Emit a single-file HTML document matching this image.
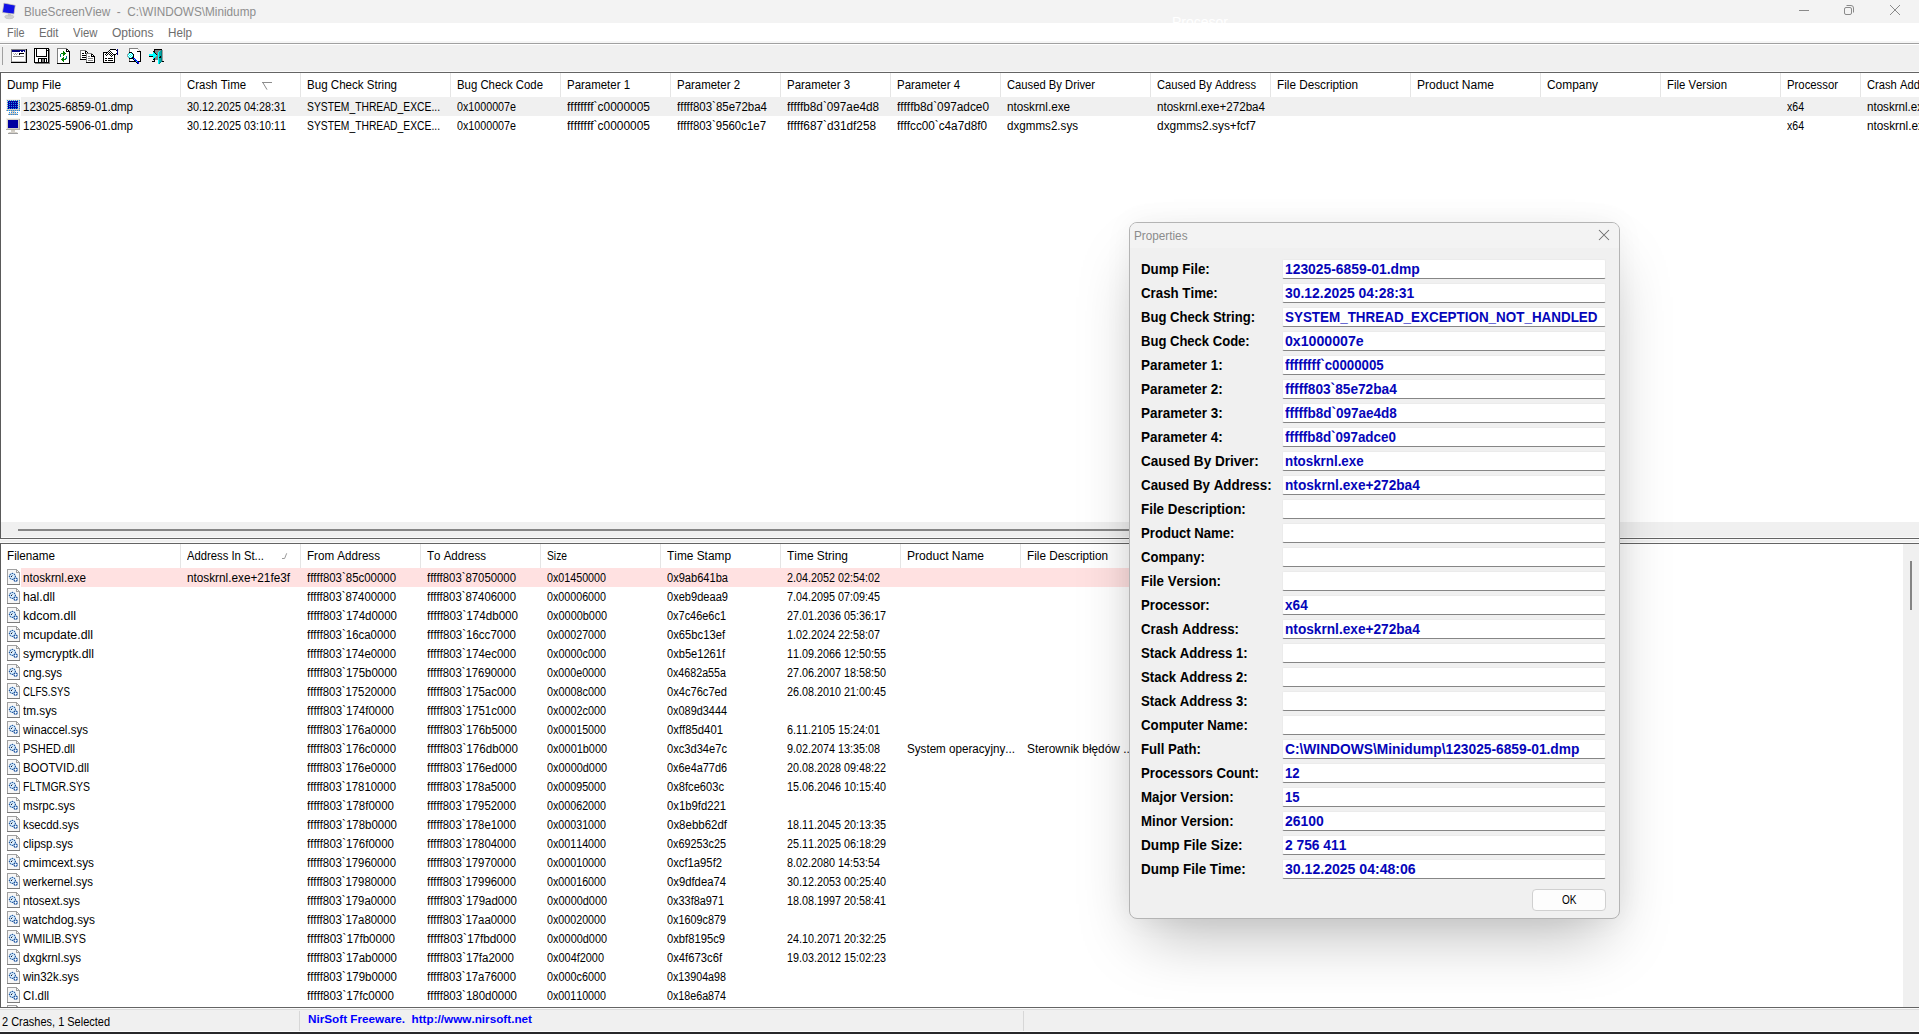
<!DOCTYPE html><html><head><meta charset="utf-8"><title>BlueScreenView</title><style>
*{box-sizing:border-box}
html,body{margin:0;padding:0}
body{width:1919px;height:1034px;overflow:hidden;position:relative;background:#f0f0f0;font-family:"Liberation Sans",sans-serif;font-size:12px;color:#000;font-kerning:none}
div,span,svg{position:absolute}
.t{white-space:pre;transform-origin:0 50%;display:block}
svg{shape-rendering:crispEdges;overflow:visible}
svg.gp{shape-rendering:geometricPrecision}
.dlg{left:1129px;top:222px;width:491px;height:697px;background:#f0f0f0;border:1px solid #b4b4b4;border-radius:8px;box-shadow:0 30px 60px -15px rgba(0,0,0,.27),0 0 28px rgba(0,0,0,.05)}
.dt{left:0;top:0;width:489px;height:25px;background:#f3f3f3;border-radius:7px 7px 0 0}
.f{left:152px;width:324px;height:20px;background:#fff;border:1px solid #ebebeb;border-bottom:1px solid #868686;border-radius:2px}
.ok{left:1532px;top:889px;width:74px;height:22px;background:#fdfdfd;border:1px solid #d0d0d0;border-radius:4px}
</style></head><body>
<div style="left:0;top:0;width:1919px;height:23px;background:#f3f3f3"></div>
<svg style="left:0;top:0" width="24" height="23" viewBox="0 0 24 23" class="gp"><ellipse cx="9.3" cy="16.8" rx="4.6" ry="2" fill="#d0d0d0" stroke="#bdbdbd" stroke-width=".6"/><path d="M8 13l3 .5l-.5 3l-2.5-.3z" fill="#c4c4c4"/><path d="M3.9 3.1L15.3 5.2L14 14.1L2.4 12.6z" fill="#1212e6" stroke="#d8d4b8" stroke-width=".7"/></svg>
<span class="t" style="left:24px;top:1px;height:23px;line-height:23px;transform:scaleX(0.9800);color:#8e8e8e">BlueScreenView  -  C:\WINDOWS\Minidump</span>
<span class="t" style="left:1171.5px;top:13px;height:18px;line-height:18px;transform:scaleX(0.9330);font-size:15px;color:#fff">Procesor</span>
<svg style="left:1790px;top:0" width="129" height="23" viewBox="0 0 129 23" class="gp"><g fill="none" stroke="#8a8a8a" stroke-width="1"><path d="M9 10.5h10"/><rect x="54.5" y="7.5" width="7" height="7" rx="1.5"/><path d="M56.5 5.5h4.5a2.5 2.5 0 0 1 2.5 2.5v4.5"/><path d="M100 5l10 10M110 5l-10 10"/></g></svg>
<div style="left:0;top:23px;width:1919px;height:20px;background:#fff"></div>
<div style="left:0;top:41px;width:1919px;height:2px;background:#f6f6f6"></div>
<div style="left:0;top:43px;width:1919px;height:1px;background:#a0a0a0"></div>
<div style="left:0;top:44px;width:1919px;height:1px;background:#fff"></div>
<span class="t" style="left:7.3px;top:24px;height:19px;line-height:19px;transform:scaleX(0.9051);color:#6d6d6d">File</span>
<span class="t" style="left:39.2px;top:24px;height:19px;line-height:19px;transform:scaleX(0.9430);color:#6d6d6d">Edit</span>
<span class="t" style="left:73px;top:24px;height:19px;line-height:19px;transform:scaleX(0.9420);color:#6d6d6d">View</span>
<span class="t" style="left:112px;top:24px;height:19px;line-height:19px;transform:scaleX(1.0035);color:#6d6d6d">Options</span>
<span class="t" style="left:168px;top:24px;height:19px;line-height:19px;transform:scaleX(0.9725);color:#6d6d6d">Help</span>
<div style="left:2px;top:47px;width:1px;height:18px;background:#a0a0a0"></div>
<svg style="left:11px;top:49px" width="16" height="14" viewBox="0 0 16 14"><path fill="#808080" d="M0 0h15v1h-15zM0 1h1v1h-1zM0 2h1v1h-1zM0 3h1v1h-1zM0 4h1v1h-1zM0 5h1v1h-1zM0 6h1v1h-1zM0 7h1v1h-1zM2 7h11v1h-11zM0 8h1v1h-1zM0 9h1v1h-1zM0 10h1v1h-1zM0 11h1v1h-1zM0 12h1v1h-1z"/><path fill="#000" d="M15 0h1v1h-1zM15 1h1v1h-1zM15 2h1v1h-1zM15 3h1v1h-1zM8 4h5v1h-5zM15 4h1v1h-1zM8 5h1v1h-1zM15 5h1v1h-1zM15 6h1v1h-1zM15 7h1v1h-1zM15 8h1v1h-1zM15 9h1v1h-1zM15 10h1v1h-1zM15 11h1v1h-1zM15 12h1v1h-1zM0 13h16v1h-16z"/><path fill="#000080" d="M1 1h13v1h-13zM1 2h8v1h-8zM10 2h2v1h-2zM13 2h1v1h-1z"/><path fill="#c0c0c0" d="M14 1h1v1h-1zM14 2h1v1h-1zM14 3h1v1h-1zM2 4h1v1h-1zM6 4h1v1h-1zM14 4h1v1h-1zM14 5h1v1h-1zM14 6h1v1h-1zM14 7h1v1h-1zM14 8h1v1h-1zM14 9h1v1h-1zM14 10h1v1h-1zM14 11h1v1h-1zM1 12h14v1h-14z"/><path fill="#fff" d="M9 2h1v1h-1zM12 2h1v1h-1zM1 3h13v1h-13zM1 4h1v1h-1zM3 4h1v1h-1zM5 4h1v1h-1zM7 4h1v1h-1zM13 4h1v1h-1zM1 5h2v1h-2zM4 5h1v1h-1zM6 5h2v1h-2zM9 5h5v1h-5zM1 6h13v1h-13zM1 7h1v1h-1zM13 7h1v1h-1zM1 8h13v1h-13zM1 9h13v1h-13zM1 10h13v1h-13zM1 11h13v1h-13z"/><path fill="#a0a0a0" d="M4 4h1v1h-1zM3 5h1v1h-1zM5 5h1v1h-1z"/></svg><svg style="left:34px;top:48px" width="16" height="16" viewBox="0 0 16 16"><path fill="#000" d="M0 0h15v1h-15zM0 1h1v1h-1zM2 1h1v1h-1zM12 1h1v1h-1zM14 1h1v1h-1zM0 2h1v1h-1zM2 2h1v1h-1zM12 2h3v1h-3zM0 3h1v1h-1zM2 3h1v1h-1zM12 3h1v1h-1zM14 3h1v1h-1zM0 4h1v1h-1zM2 4h1v1h-1zM12 4h1v1h-1zM14 4h1v1h-1zM0 5h1v1h-1zM2 5h1v1h-1zM12 5h1v1h-1zM14 5h1v1h-1zM0 6h1v1h-1zM2 6h1v1h-1zM12 6h1v1h-1zM14 6h1v1h-1zM0 7h1v1h-1zM2 7h1v1h-1zM12 7h1v1h-1zM14 7h1v1h-1zM0 8h1v1h-1zM2 8h11v1h-11zM14 8h1v1h-1zM0 9h1v1h-1zM14 9h1v1h-1zM0 10h1v1h-1zM4 10h9v1h-9zM14 10h1v1h-1zM0 11h1v1h-1zM4 11h1v1h-1zM7 11h1v1h-1zM10 11h1v1h-1zM12 11h1v1h-1zM14 11h1v1h-1zM0 12h1v1h-1zM4 12h1v1h-1zM7 12h1v1h-1zM10 12h1v1h-1zM12 12h1v1h-1zM14 12h1v1h-1zM0 13h1v1h-1zM4 13h1v1h-1zM7 13h1v1h-1zM10 13h1v1h-1zM12 13h1v1h-1zM14 13h1v1h-1zM0 14h15v1h-15z"/><path fill="#fff" d="M1 1h1v1h-1zM3 1h9v1h-9zM13 1h1v1h-1zM1 2h1v1h-1zM3 2h9v1h-9zM1 3h1v1h-1zM3 3h9v1h-9zM13 3h1v1h-1zM1 4h1v1h-1zM3 4h9v1h-9zM13 4h1v1h-1zM1 5h1v1h-1zM3 5h9v1h-9zM13 5h1v1h-1zM1 6h1v1h-1zM3 6h9v1h-9zM13 6h1v1h-1zM1 7h1v1h-1zM3 7h9v1h-9zM13 7h1v1h-1zM1 8h1v1h-1zM13 8h1v1h-1zM1 9h13v1h-13zM1 10h3v1h-3zM13 10h1v1h-1zM1 11h3v1h-3zM5 11h2v1h-2zM11 11h1v1h-1zM13 11h1v1h-1zM1 12h3v1h-3zM5 12h2v1h-2zM11 12h1v1h-1zM13 12h1v1h-1zM1 13h3v1h-3zM5 13h2v1h-2zM11 13h1v1h-1zM13 13h1v1h-1z"/><path fill="#808080" d="M15 1h1v1h-1zM15 2h1v1h-1zM15 3h1v1h-1zM15 4h1v1h-1zM15 5h1v1h-1zM15 6h1v1h-1zM15 7h1v1h-1zM15 8h1v1h-1zM15 9h1v1h-1zM15 10h1v1h-1zM8 11h2v1h-2zM15 11h1v1h-1zM8 12h2v1h-2zM15 12h1v1h-1zM8 13h2v1h-2zM15 13h1v1h-1zM15 14h1v1h-1zM1 15h15v1h-15z"/></svg><svg style="left:57px;top:48px" width="13" height="16" viewBox="0 0 13 16"><path fill="#808080" d="M0 0h10v1h-10zM0 1h1v1h-1zM0 2h1v1h-1zM0 3h1v1h-1zM0 4h1v1h-1zM0 5h1v1h-1zM0 6h1v1h-1zM0 7h1v1h-1zM0 8h1v1h-1zM0 9h1v1h-1zM0 10h1v1h-1zM0 11h1v1h-1zM0 12h1v1h-1zM0 13h1v1h-1zM0 14h1v1h-1z"/><path fill="#fff" d="M1 1h8v1h-8zM1 2h8v1h-8zM10 2h1v1h-1zM1 3h5v1h-5zM7 3h2v1h-2zM1 4h5v1h-5zM8 4h4v1h-4zM1 5h3v1h-3zM9 5h3v1h-3zM1 6h2v1h-2zM4 6h2v1h-2zM8 6h4v1h-4zM1 7h2v1h-2zM4 7h2v1h-2zM7 7h5v1h-5zM1 8h2v1h-2zM4 8h5v1h-5zM10 8h2v1h-2zM1 9h5v1h-5zM7 9h2v1h-2zM10 9h2v1h-2zM1 10h4v1h-4zM7 10h1v1h-1zM10 10h2v1h-2zM1 11h3v1h-3zM9 11h3v1h-3zM1 12h4v1h-4zM7 12h5v1h-5zM1 13h5v1h-5zM7 13h5v1h-5zM1 14h11v1h-11z"/><path fill="#000" d="M9 1h2v1h-2zM9 2h1v1h-1zM11 2h1v1h-1zM9 3h4v1h-4zM12 4h1v1h-1zM12 5h1v1h-1zM12 6h1v1h-1zM12 7h1v1h-1zM12 8h1v1h-1zM12 9h1v1h-1zM12 10h1v1h-1zM12 11h1v1h-1zM12 12h1v1h-1zM12 13h1v1h-1zM12 14h1v1h-1zM0 15h13v1h-13z"/><path fill="#008000" d="M6 3h1v1h-1zM6 4h2v1h-2zM4 5h5v1h-5zM6 6h2v1h-2zM6 7h1v1h-1zM6 9h1v1h-1zM5 10h2v1h-2zM4 11h5v1h-5zM5 12h2v1h-2zM6 13h1v1h-1z"/><path fill="#008080" d="M3 6h1v1h-1zM3 7h1v1h-1zM3 8h1v1h-1zM9 8h1v1h-1zM9 9h1v1h-1zM8 10h2v1h-2z"/></svg><svg style="left:80px;top:50px" width="15" height="13" viewBox="0 0 15 13"><path fill="#808080" d="M0 0h6v1h-6zM0 1h1v1h-1zM0 2h1v1h-1zM0 3h1v1h-1zM6 3h6v1h-6zM0 4h1v1h-1zM6 4h1v1h-1zM0 5h1v1h-1zM6 5h1v1h-1zM0 6h1v1h-1zM6 6h1v1h-1zM8 6h2v1h-2zM0 7h1v1h-1zM6 7h1v1h-1zM0 8h1v1h-1zM6 8h1v1h-1zM8 8h5v1h-5zM6 9h1v1h-1zM6 10h1v1h-1zM8 10h5v1h-5zM6 11h1v1h-1z"/><path fill="#fff" d="M1 1h4v1h-4zM1 2h4v1h-4zM6 2h1v1h-1zM1 3h1v1h-1zM4 3h1v1h-1zM1 4h5v1h-5zM7 4h4v1h-4zM1 5h1v1h-1zM7 5h4v1h-4zM12 5h1v1h-1zM1 6h5v1h-5zM7 6h1v1h-1zM10 6h1v1h-1zM1 7h1v1h-1zM7 7h7v1h-7zM1 8h5v1h-5zM7 8h1v1h-1zM13 8h1v1h-1zM7 9h7v1h-7zM7 10h1v1h-1zM13 10h1v1h-1zM7 11h7v1h-7z"/><path fill="#000" d="M5 1h2v1h-2zM5 2h1v1h-1zM7 2h1v1h-1zM2 3h2v1h-2zM5 3h1v1h-1zM11 4h2v1h-2zM2 5h4v1h-4zM11 5h1v1h-1zM13 5h1v1h-1zM11 6h4v1h-4zM2 7h4v1h-4zM14 7h1v1h-1zM14 8h1v1h-1zM0 9h6v1h-6zM14 9h1v1h-1zM14 10h1v1h-1zM14 11h1v1h-1zM6 12h9v1h-9z"/></svg><svg style="left:103px;top:49px" width="15" height="14" viewBox="0 0 15 14"><path fill="#000" d="M7 0h6v1h-6zM6 1h1v1h-1zM13 1h1v1h-1zM5 2h1v1h-1zM7 2h1v1h-1zM0 3h5v1h-5zM6 3h1v1h-1zM8 3h1v1h-1zM0 4h1v1h-1zM3 4h1v1h-1zM5 4h1v1h-1zM7 4h1v1h-1zM9 4h1v1h-1zM13 4h1v1h-1zM0 5h1v1h-1zM2 5h1v1h-1zM4 5h1v1h-1zM6 5h1v1h-1zM8 5h1v1h-1zM10 5h3v1h-3zM0 6h1v1h-1zM3 6h1v1h-1zM7 6h1v1h-1zM9 6h1v1h-1zM11 6h1v1h-1zM0 7h1v1h-1zM8 7h1v1h-1zM11 7h1v1h-1zM0 8h1v1h-1zM11 8h1v1h-1zM0 9h1v1h-1zM2 9h2v1h-2zM5 9h5v1h-5zM11 9h1v1h-1zM0 10h1v1h-1zM11 10h1v1h-1zM0 11h1v1h-1zM2 11h2v1h-2zM5 11h5v1h-5zM11 11h1v1h-1zM0 12h1v1h-1zM11 12h1v1h-1zM0 13h12v1h-12z"/><path fill="#000080" d="M14 0h1v1h-1zM14 1h1v1h-1zM14 2h1v1h-1zM14 3h1v1h-1zM14 4h1v1h-1zM14 5h1v1h-1z"/><path fill="#fff" d="M7 1h6v1h-6zM6 2h1v1h-1zM8 2h6v1h-6zM5 3h1v1h-1zM7 3h1v1h-1zM9 3h5v1h-5zM1 4h2v1h-2zM4 4h1v1h-1zM6 4h1v1h-1zM8 4h1v1h-1zM10 4h3v1h-3zM1 5h1v1h-1zM3 5h1v1h-1zM5 5h1v1h-1zM7 5h1v1h-1zM9 5h1v1h-1zM1 6h2v1h-2zM4 6h3v1h-3zM8 6h1v1h-1zM10 6h1v1h-1zM1 7h7v1h-7zM9 7h2v1h-2zM1 8h10v1h-10zM1 9h1v1h-1zM4 9h1v1h-1zM10 9h1v1h-1zM1 10h10v1h-10zM1 11h1v1h-1zM4 11h1v1h-1zM10 11h1v1h-1zM1 12h10v1h-10z"/></svg><svg style="left:127px;top:48px" width="15" height="16" viewBox="0 0 15 16"><path fill="#808080" d="M2 0h9v1h-9zM2 1h1v1h-1zM2 2h1v1h-1zM2 3h1v1h-1zM2 11h1v1h-1zM2 12h1v1h-1z"/><path fill="#fff" d="M3 1h8v1h-8zM3 2h9v1h-9zM3 3h7v1h-7zM5 4h8v1h-8zM3 5h1v1h-1zM6 5h7v1h-7zM2 6h1v1h-1zM4 6h1v1h-1zM7 6h6v1h-6zM1 7h1v1h-1zM3 7h1v1h-1zM5 7h1v1h-1zM7 7h6v1h-6zM2 8h1v1h-1zM4 8h1v1h-1zM7 8h6v1h-6zM3 9h1v1h-1zM7 9h6v1h-6zM8 10h5v1h-5zM3 11h3v1h-3zM9 11h4v1h-4zM3 12h4v1h-4zM10 12h3v1h-3z"/><path fill="#c0c0c0" d="M11 1h1v1h-1zM12 2h1v1h-1z"/><path fill="#000" d="M10 3h4v1h-4zM2 4h3v1h-3zM13 4h1v1h-1zM5 5h1v1h-1zM13 5h1v1h-1zM6 6h1v1h-1zM13 6h1v1h-1zM6 7h1v1h-1zM13 7h1v1h-1zM6 8h1v1h-1zM13 8h1v1h-1zM5 9h2v1h-2zM13 9h1v1h-1zM2 10h4v1h-4zM13 10h1v1h-1zM6 11h1v1h-1zM13 11h1v1h-1zM7 12h1v1h-1zM13 12h1v1h-1zM2 13h7v1h-7zM11 13h3v1h-3zM9 14h1v1h-1zM10 15h1v1h-1z"/><path fill="#a0a0a0" d="M1 5h1v1h-1zM0 6h1v1h-1zM0 7h1v1h-1zM0 8h1v1h-1zM1 9h1v1h-1z"/><path fill="#00ffff" d="M2 5h1v1h-1zM4 5h1v1h-1zM1 6h1v1h-1zM3 6h1v1h-1zM5 6h1v1h-1zM2 7h1v1h-1zM4 7h1v1h-1zM1 8h1v1h-1zM3 8h1v1h-1zM5 8h1v1h-1zM2 9h1v1h-1zM4 9h1v1h-1zM7 11h1v1h-1zM9 13h1v1h-1z"/><path fill="#0000ff" d="M6 10h2v1h-2zM8 11h1v1h-1zM8 12h2v1h-2zM10 13h1v1h-1zM10 14h2v1h-2zM11 15h1v1h-1z"/></svg><svg style="left:149px;top:49px" width="15" height="15" viewBox="0 0 15 15"><path fill="#000" d="M5 0h8v1h-8zM5 1h1v1h-1zM4 2h2v1h-2zM5 3h1v1h-1zM6 4h1v1h-1zM7 5h1v1h-1zM0 7h4v1h-4zM11 7h1v1h-1zM10 8h2v1h-2zM5 9h1v1h-1zM4 10h2v1h-2zM5 11h1v1h-1zM3 12h3v1h-3zM13 12h2v1h-2z"/><path fill="#808080" d="M6 1h6v1h-6zM6 2h4v1h-4zM6 3h3v1h-3zM7 4h2v1h-2zM8 5h1v1h-1zM8 6h1v1h-1zM7 7h2v1h-2zM6 8h3v1h-3zM6 9h3v1h-3zM6 10h3v1h-3z"/><path fill="#008080" d="M12 1h1v1h-1zM12 2h1v1h-1zM12 3h1v1h-1zM12 4h1v1h-1zM12 5h1v1h-1zM12 6h1v1h-1zM12 7h1v1h-1zM12 8h1v1h-1zM12 9h1v1h-1zM12 10h1v1h-1zM12 11h1v1h-1zM12 12h1v1h-1zM11 13h1v1h-1zM10 14h1v1h-1z"/><path fill="#a0a0a0" d="M13 1h1v1h-1zM13 2h1v1h-1zM13 3h1v1h-1zM13 4h1v1h-1zM13 5h1v1h-1zM13 6h1v1h-1zM13 7h1v1h-1zM13 8h1v1h-1zM13 9h1v1h-1zM13 10h1v1h-1zM13 11h1v1h-1z"/><path fill="#00ffff" d="M10 2h1v1h-1zM4 3h1v1h-1zM9 3h1v1h-1zM4 4h2v1h-2zM9 4h1v1h-1zM0 5h7v1h-7zM9 5h1v1h-1zM0 6h8v1h-8zM9 6h1v1h-1zM4 7h3v1h-3zM9 7h1v1h-1zM4 8h2v1h-2zM9 8h1v1h-1zM4 9h1v1h-1zM9 9h1v1h-1zM9 10h1v1h-1zM9 11h1v1h-1zM9 12h1v1h-1zM9 13h1v1h-1zM9 14h1v1h-1z"/><path fill="#00a8a8" d="M11 2h1v1h-1zM10 3h2v1h-2zM10 4h2v1h-2zM10 5h2v1h-2zM10 6h2v1h-2zM10 7h1v1h-1zM10 9h2v1h-2zM10 10h2v1h-2zM10 11h2v1h-2zM10 12h2v1h-2zM10 13h1v1h-1z"/></svg>
<div style="left:0;top:71px;width:1919px;height:1px;background:#fafafa"></div>
<div style="left:0;top:72px;width:1919px;height:467px;background:#fff;border-left:1px solid #5a5a5a;border-top:1px solid #646464;border-bottom:1px solid #646464"></div>
<div style="left:1px;top:522px;width:1918px;height:16px;background:#f0f0f0"></div>
<div style="left:18px;top:529px;width:1480px;height:2px;background:#858585"></div>
<span class="t" style="left:7px;top:73px;height:24px;line-height:24px;transform:scaleX(0.9876)">Dump File</span>
<span class="t" style="left:187px;top:73px;height:24px;line-height:24px;transform:scaleX(0.9515)">Crash Time</span>
<div style="left:180px;top:73px;width:1px;height:24px;background:#e5e5e5"></div>
<span class="t" style="left:307px;top:73px;height:24px;line-height:24px;transform:scaleX(0.9638)">Bug Check String</span>
<div style="left:300px;top:73px;width:1px;height:24px;background:#e5e5e5"></div>
<span class="t" style="left:457px;top:73px;height:24px;line-height:24px;transform:scaleX(0.9480)">Bug Check Code</span>
<div style="left:450px;top:73px;width:1px;height:24px;background:#e5e5e5"></div>
<span class="t" style="left:567px;top:73px;height:24px;line-height:24px;transform:scaleX(0.9541)">Parameter 1</span>
<div style="left:560px;top:73px;width:1px;height:24px;background:#e5e5e5"></div>
<span class="t" style="left:677px;top:73px;height:24px;line-height:24px;transform:scaleX(0.9541)">Parameter 2</span>
<div style="left:670px;top:73px;width:1px;height:24px;background:#e5e5e5"></div>
<span class="t" style="left:787px;top:73px;height:24px;line-height:24px;transform:scaleX(0.9541)">Parameter 3</span>
<div style="left:780px;top:73px;width:1px;height:24px;background:#e5e5e5"></div>
<span class="t" style="left:897px;top:73px;height:24px;line-height:24px;transform:scaleX(0.9541)">Parameter 4</span>
<div style="left:890px;top:73px;width:1px;height:24px;background:#e5e5e5"></div>
<span class="t" style="left:1007px;top:73px;height:24px;line-height:24px;transform:scaleX(0.9359)">Caused By Driver</span>
<div style="left:1000px;top:73px;width:1px;height:24px;background:#e5e5e5"></div>
<span class="t" style="left:1157px;top:73px;height:24px;line-height:24px;transform:scaleX(0.9335)">Caused By Address</span>
<div style="left:1150px;top:73px;width:1px;height:24px;background:#e5e5e5"></div>
<span class="t" style="left:1277px;top:73px;height:24px;line-height:24px;transform:scaleX(0.9795)">File Description</span>
<div style="left:1270px;top:73px;width:1px;height:24px;background:#e5e5e5"></div>
<span class="t" style="left:1417px;top:73px;height:24px;line-height:24px;transform:scaleX(1.0039)">Product Name</span>
<div style="left:1410px;top:73px;width:1px;height:24px;background:#e5e5e5"></div>
<span class="t" style="left:1547px;top:73px;height:24px;line-height:24px;transform:scaleX(0.9930)">Company</span>
<div style="left:1540px;top:73px;width:1px;height:24px;background:#e5e5e5"></div>
<span class="t" style="left:1667px;top:73px;height:24px;line-height:24px;transform:scaleX(0.9470)">File Version</span>
<div style="left:1660px;top:73px;width:1px;height:24px;background:#e5e5e5"></div>
<span class="t" style="left:1787px;top:73px;height:24px;line-height:24px;transform:scaleX(0.9441)">Processor</span>
<div style="left:1780px;top:73px;width:1px;height:24px;background:#e5e5e5"></div>
<span class="t" style="left:1867px;top:73px;height:24px;line-height:24px;transform:scaleX(0.9324)">Crash Address</span>
<div style="left:1860px;top:73px;width:1px;height:24px;background:#e5e5e5"></div>
<svg style="left:262px;top:82px" width="11" height="8" viewBox="0 0 11 8" class="gp"><path d="M0 .5h10M.8 .5L5 7.6" stroke="#8c8c8c" stroke-width="1" fill="none"/></svg>
<div style="left:21px;top:97px;width:1898px;height:19px;background:#f0f0f0"></div>
<svg style="left:6px;top:99px" width="14" height="16" viewBox="0 0 14 16"><path fill="#f4f2ea" d="M0 0h14v1h-14zM0 1h1v1h-1zM0 2h1v1h-1zM0 3h1v1h-1zM0 4h1v1h-1zM0 5h1v1h-1zM0 6h1v1h-1zM0 7h1v1h-1zM0 8h1v1h-1zM0 9h1v1h-1zM0 10h1v1h-1zM2 14h1v1h-1zM11 14h1v1h-1z"/><path fill="#d4d0c8" d="M1 1h12v1h-12zM1 2h1v1h-1zM12 2h1v1h-1zM1 3h1v1h-1zM12 3h1v1h-1zM1 4h1v1h-1zM12 4h1v1h-1zM1 5h1v1h-1zM12 5h1v1h-1zM1 6h1v1h-1zM12 6h1v1h-1zM1 7h1v1h-1zM12 7h1v1h-1zM1 8h1v1h-1zM12 8h1v1h-1zM1 9h1v1h-1zM12 9h1v1h-1zM1 10h12v1h-12zM5 13h4v1h-4zM3 14h8v1h-8z"/><path fill="#b4b0a4" d="M13 1h1v1h-1zM13 2h1v1h-1zM13 3h1v1h-1zM13 4h1v1h-1zM13 5h1v1h-1zM13 6h1v1h-1zM13 7h1v1h-1zM13 8h1v1h-1zM13 9h1v1h-1zM13 10h1v1h-1zM0 11h14v1h-14z"/><path fill="#0000a0" d="M2 2h10v1h-10zM2 3h10v1h-10zM2 4h10v1h-10zM2 5h10v1h-10zM2 6h10v1h-10zM2 7h10v1h-10zM2 8h10v1h-10zM2 9h10v1h-10z"/><path fill="#cfcbc0" d="M5 12h4v1h-4z"/><path fill="#a0a0a0" d="M2 15h10v1h-10z"/><defs><pattern id="dz" width="2" height="2" patternUnits="userSpaceOnUse"><rect x="1" y="1" width="1" height="1" fill="#1e8ce6"/></pattern></defs><rect x="0" y="0" width="14" height="12" fill="url(#dz)"/><rect x="2" y="12" width="10" height="4" fill="url(#dz)"/></svg>
<span class="t" style="left:23.4px;top:98px;height:19px;line-height:19px;transform:scaleX(0.9586)">123025-6859-01.dmp</span>
<span class="t" style="left:187px;top:98px;height:19px;line-height:19px;transform:scaleX(0.8992)">30.12.2025 04:28:31</span>
<span class="t" style="left:307px;top:98px;height:19px;line-height:19px;transform:scaleX(0.8597)">SYSTEM_THREAD_EXCE...</span>
<span class="t" style="left:457px;top:98px;height:19px;line-height:19px;transform:scaleX(0.8931)">0x1000007e</span>
<span class="t" style="left:567px;top:98px;height:19px;line-height:19px;transform:scaleX(0.9954)">ffffffff`c0000005</span>
<span class="t" style="left:677px;top:98px;height:19px;line-height:19px;transform:scaleX(0.9567)">fffff803`85e72ba4</span>
<span class="t" style="left:787px;top:98px;height:19px;line-height:19px;transform:scaleX(0.9779)">fffffb8d`097ae4d8</span>
<span class="t" style="left:897px;top:98px;height:19px;line-height:19px;transform:scaleX(0.9850)">fffffb8d`097adce0</span>
<span class="t" style="left:1007px;top:98px;height:19px;line-height:19px;transform:scaleX(0.9737)">ntoskrnl.exe</span>
<span class="t" style="left:1157px;top:98px;height:19px;line-height:19px;transform:scaleX(0.9664)">ntoskrnl.exe+272ba4</span>
<span class="t" style="left:1787px;top:98px;height:19px;line-height:19px;transform:scaleX(0.8787)">x64</span>
<span class="t" style="left:1867px;top:98px;height:19px;line-height:19px;transform:scaleX(0.9664)">ntoskrnl.exe+272ba4</span>
<svg style="left:6px;top:118px" width="14" height="16" viewBox="0 0 14 16"><path fill="#f4f2ea" d="M0 0h14v1h-14zM0 1h1v1h-1zM0 2h1v1h-1zM0 3h1v1h-1zM0 4h1v1h-1zM0 5h1v1h-1zM0 6h1v1h-1zM0 7h1v1h-1zM0 8h1v1h-1zM0 9h1v1h-1zM0 10h1v1h-1zM2 14h1v1h-1zM11 14h1v1h-1z"/><path fill="#d4d0c8" d="M1 1h12v1h-12zM1 2h1v1h-1zM12 2h1v1h-1zM1 3h1v1h-1zM12 3h1v1h-1zM1 4h1v1h-1zM12 4h1v1h-1zM1 5h1v1h-1zM12 5h1v1h-1zM1 6h1v1h-1zM12 6h1v1h-1zM1 7h1v1h-1zM12 7h1v1h-1zM1 8h1v1h-1zM12 8h1v1h-1zM1 9h1v1h-1zM12 9h1v1h-1zM1 10h12v1h-12zM5 13h4v1h-4zM3 14h8v1h-8z"/><path fill="#b4b0a4" d="M13 1h1v1h-1zM13 2h1v1h-1zM13 3h1v1h-1zM13 4h1v1h-1zM13 5h1v1h-1zM13 6h1v1h-1zM13 7h1v1h-1zM13 8h1v1h-1zM13 9h1v1h-1zM13 10h1v1h-1zM0 11h14v1h-14z"/><path fill="#0000a0" d="M2 2h10v1h-10zM2 3h10v1h-10zM2 4h10v1h-10zM2 5h10v1h-10zM2 6h10v1h-10zM2 7h10v1h-10zM2 8h10v1h-10zM2 9h10v1h-10z"/><path fill="#cfcbc0" d="M5 12h4v1h-4z"/><path fill="#a0a0a0" d="M2 15h10v1h-10z"/></svg>
<span class="t" style="left:23.4px;top:117px;height:19px;line-height:19px;transform:scaleX(0.9586)">123025-5906-01.dmp</span>
<span class="t" style="left:187px;top:117px;height:19px;line-height:19px;transform:scaleX(0.8992)">30.12.2025 03:10:11</span>
<span class="t" style="left:307px;top:117px;height:19px;line-height:19px;transform:scaleX(0.8597)">SYSTEM_THREAD_EXCE...</span>
<span class="t" style="left:457px;top:117px;height:19px;line-height:19px;transform:scaleX(0.8931)">0x1000007e</span>
<span class="t" style="left:567px;top:117px;height:19px;line-height:19px;transform:scaleX(0.9954)">ffffffff`c0000005</span>
<span class="t" style="left:677px;top:117px;height:19px;line-height:19px;transform:scaleX(0.9528)">fffff803`9560c1e7</span>
<span class="t" style="left:787px;top:117px;height:19px;line-height:19px;transform:scaleX(0.9808)">fffff687`d31df258</span>
<span class="t" style="left:897px;top:117px;height:19px;line-height:19px;transform:scaleX(0.9777)">ffffcc00`c4a7d8f0</span>
<span class="t" style="left:1007px;top:117px;height:19px;line-height:19px;transform:scaleX(0.9680)">dxgmms2.sys</span>
<span class="t" style="left:1157px;top:117px;height:19px;line-height:19px;transform:scaleX(0.9930)">dxgmms2.sys+fcf7</span>
<span class="t" style="left:1787px;top:117px;height:19px;line-height:19px;transform:scaleX(0.8787)">x64</span>
<span class="t" style="left:1867px;top:117px;height:19px;line-height:19px;transform:scaleX(0.9803)">ntoskrnl.exe+21fe3f</span>
<div style="left:1px;top:537px;width:1919px;height:1px;background:#fafafa"></div>
<div style="left:0px;top:539px;width:1919px;height:1px;background:#fafafa"></div>
<div style="left:0px;top:542px;width:1919px;height:1px;background:#fafafa"></div>
<div style="left:0;top:543px;width:1919px;height:465px;background:#fff;border-left:1px solid #5a5a5a;border-top:1px solid #646464;border-bottom:1px solid #646464"></div>
<div style="left:1903px;top:544px;width:16px;height:463px;background:#f0f0f0"></div>
<div style="left:1910px;top:561px;width:2px;height:49px;background:#858585"></div>
<span class="t" style="left:7px;top:544px;height:24px;line-height:24px;transform:scaleX(0.9726)">Filename</span>
<span class="t" style="left:187px;top:544px;height:24px;line-height:24px;transform:scaleX(0.9386)">Address In St...</span>
<div style="left:180px;top:544px;width:1px;height:24px;background:#e5e5e5"></div>
<span class="t" style="left:307px;top:544px;height:24px;line-height:24px;transform:scaleX(0.9688)">From Address</span>
<div style="left:300px;top:544px;width:1px;height:24px;background:#e5e5e5"></div>
<span class="t" style="left:427px;top:544px;height:24px;line-height:24px;transform:scaleX(0.9615)">To Address</span>
<div style="left:420px;top:544px;width:1px;height:24px;background:#e5e5e5"></div>
<span class="t" style="left:547px;top:544px;height:24px;line-height:24px;transform:scaleX(0.8568)">Size</span>
<div style="left:540px;top:544px;width:1px;height:24px;background:#e5e5e5"></div>
<span class="t" style="left:667px;top:544px;height:24px;line-height:24px;transform:scaleX(0.9895)">Time Stamp</span>
<div style="left:660px;top:544px;width:1px;height:24px;background:#e5e5e5"></div>
<span class="t" style="left:787px;top:544px;height:24px;line-height:24px;transform:scaleX(0.9943)">Time String</span>
<div style="left:780px;top:544px;width:1px;height:24px;background:#e5e5e5"></div>
<span class="t" style="left:907px;top:544px;height:24px;line-height:24px;transform:scaleX(1.0039)">Product Name</span>
<div style="left:900px;top:544px;width:1px;height:24px;background:#e5e5e5"></div>
<span class="t" style="left:1027px;top:544px;height:24px;line-height:24px;transform:scaleX(0.9795)">File Description</span>
<div style="left:1020px;top:544px;width:1px;height:24px;background:#e5e5e5"></div>
<svg style="left:281px;top:552px" width="7" height="8" viewBox="0 0 7 8" class="gp"><path d="M1 6.5H3.6L5.7 1.3" stroke="#9a9a9a" stroke-width="1" fill="none"/></svg>
<div style="left:21px;top:568px;width:1480px;height:19px;background:#ffe1e1"></div>
<svg style="left:7px;top:569px" width="13" height="16" viewBox="0 0 13 16"><path fill="#a0a0a0" d="M0 0h10v1h-10zM0 1h1v1h-1zM9 1h2v1h-2zM0 2h1v1h-1zM9 2h1v1h-1zM11 2h1v1h-1zM0 3h1v1h-1zM9 3h4v1h-4zM0 4h1v1h-1zM12 4h1v1h-1zM0 5h1v1h-1zM12 5h1v1h-1zM0 6h1v1h-1zM12 6h1v1h-1zM0 7h1v1h-1zM12 7h1v1h-1zM0 8h1v1h-1zM12 8h1v1h-1zM0 9h1v1h-1zM12 9h1v1h-1zM0 10h1v1h-1zM12 10h1v1h-1zM0 11h1v1h-1zM12 11h1v1h-1zM0 12h1v1h-1zM12 12h1v1h-1zM0 13h1v1h-1zM12 13h1v1h-1zM0 14h1v1h-1zM12 14h1v1h-1z"/><path fill="#f6f6f6" d="M1 1h8v1h-8zM1 2h8v1h-8zM10 2h1v1h-1zM1 3h8v1h-8zM1 4h11v1h-11zM1 5h11v1h-11zM1 6h11v1h-11zM1 7h11v1h-11zM1 8h11v1h-11zM1 9h11v1h-11zM1 10h11v1h-11zM1 11h11v1h-11zM1 12h11v1h-11zM1 13h11v1h-11zM1 14h11v1h-11z"/><path fill="#7a7a7a" d="M0 15h13v1h-13z"/><g shape-rendering="geometricPrecision" stroke="none"><circle cx="5.4" cy="7.4" r="3" fill="#d9ecfb" stroke="#86b4e2" stroke-width=".9"/><circle cx="8.6" cy="10.6" r="1.7" fill="#dcebfa" stroke="#4a7fc2" stroke-width="1"/><g fill="#1f5096"><circle cx="8.40" cy="7.40" r=".62"/><circle cx="7.52" cy="9.52" r=".62"/><circle cx="5.40" cy="10.40" r=".62"/><circle cx="3.28" cy="9.52" r=".62"/><circle cx="2.40" cy="7.40" r=".62"/><circle cx="3.28" cy="5.28" r=".62"/><circle cx="5.40" cy="4.40" r=".62"/><circle cx="7.52" cy="5.28" r=".62"/><circle cx="9.73" cy="11.73" r=".72"/><circle cx="7.47" cy="11.73" r=".72"/><circle cx="7.47" cy="9.47" r=".72"/><circle cx="9.73" cy="9.47" r=".72"/></g><circle cx="8.6" cy="10.6" r=".85" fill="#fff"/><circle cx="4.5" cy="7.4" r=".62" fill="#0c1430"/><circle cx="5.45" cy="6.4" r=".45" fill="#1c3c6c"/><circle cx="5.6" cy="7.7" r=".5" fill="#fff"/></g></svg>
<span class="t" style="left:23.4px;top:569px;height:19px;line-height:19px;transform:scaleX(0.9737)">ntoskrnl.exe</span>
<span class="t" style="left:187px;top:569px;height:19px;line-height:19px;transform:scaleX(0.9803)">ntoskrnl.exe+21fe3f</span>
<span class="t" style="left:307px;top:569px;height:19px;line-height:19px;transform:scaleX(0.9528)">fffff803`85c00000</span>
<span class="t" style="left:427px;top:569px;height:19px;line-height:19px;transform:scaleX(0.9460)">fffff803`87050000</span>
<span class="t" style="left:547px;top:569px;height:19px;line-height:19px;transform:scaleX(0.8931)">0x01450000</span>
<span class="t" style="left:667px;top:569px;height:19px;line-height:19px;transform:scaleX(0.9233)">0x9ab641ba</span>
<span class="t" style="left:787px;top:569px;height:19px;line-height:19px;transform:scaleX(0.8992)">2.04.2052 02:54:02</span>
<svg style="left:7px;top:588px" width="13" height="16" viewBox="0 0 13 16"><path fill="#a0a0a0" d="M0 0h10v1h-10zM0 1h1v1h-1zM9 1h2v1h-2zM0 2h1v1h-1zM9 2h1v1h-1zM11 2h1v1h-1zM0 3h1v1h-1zM9 3h4v1h-4zM0 4h1v1h-1zM12 4h1v1h-1zM0 5h1v1h-1zM12 5h1v1h-1zM0 6h1v1h-1zM12 6h1v1h-1zM0 7h1v1h-1zM12 7h1v1h-1zM0 8h1v1h-1zM12 8h1v1h-1zM0 9h1v1h-1zM12 9h1v1h-1zM0 10h1v1h-1zM12 10h1v1h-1zM0 11h1v1h-1zM12 11h1v1h-1zM0 12h1v1h-1zM12 12h1v1h-1zM0 13h1v1h-1zM12 13h1v1h-1zM0 14h1v1h-1zM12 14h1v1h-1z"/><path fill="#f6f6f6" d="M1 1h8v1h-8zM1 2h8v1h-8zM10 2h1v1h-1zM1 3h8v1h-8zM1 4h11v1h-11zM1 5h11v1h-11zM1 6h11v1h-11zM1 7h11v1h-11zM1 8h11v1h-11zM1 9h11v1h-11zM1 10h11v1h-11zM1 11h11v1h-11zM1 12h11v1h-11zM1 13h11v1h-11zM1 14h11v1h-11z"/><path fill="#7a7a7a" d="M0 15h13v1h-13z"/><g shape-rendering="geometricPrecision" stroke="none"><circle cx="5.4" cy="7.4" r="3" fill="#d9ecfb" stroke="#86b4e2" stroke-width=".9"/><circle cx="8.6" cy="10.6" r="1.7" fill="#dcebfa" stroke="#4a7fc2" stroke-width="1"/><g fill="#1f5096"><circle cx="8.40" cy="7.40" r=".62"/><circle cx="7.52" cy="9.52" r=".62"/><circle cx="5.40" cy="10.40" r=".62"/><circle cx="3.28" cy="9.52" r=".62"/><circle cx="2.40" cy="7.40" r=".62"/><circle cx="3.28" cy="5.28" r=".62"/><circle cx="5.40" cy="4.40" r=".62"/><circle cx="7.52" cy="5.28" r=".62"/><circle cx="9.73" cy="11.73" r=".72"/><circle cx="7.47" cy="11.73" r=".72"/><circle cx="7.47" cy="9.47" r=".72"/><circle cx="9.73" cy="9.47" r=".72"/></g><circle cx="8.6" cy="10.6" r=".85" fill="#fff"/><circle cx="4.5" cy="7.4" r=".62" fill="#0c1430"/><circle cx="5.45" cy="6.4" r=".45" fill="#1c3c6c"/><circle cx="5.6" cy="7.7" r=".5" fill="#fff"/></g></svg>
<span class="t" style="left:23.4px;top:588px;height:19px;line-height:19px;transform:scaleX(1.0206)">hal.dll</span>
<span class="t" style="left:307px;top:588px;height:19px;line-height:19px;transform:scaleX(0.9460)">fffff803`87400000</span>
<span class="t" style="left:427px;top:588px;height:19px;line-height:19px;transform:scaleX(0.9460)">fffff803`87406000</span>
<span class="t" style="left:547px;top:588px;height:19px;line-height:19px;transform:scaleX(0.8931)">0x00006000</span>
<span class="t" style="left:667px;top:588px;height:19px;line-height:19px;transform:scaleX(0.9233)">0xeb9deaa9</span>
<span class="t" style="left:787px;top:588px;height:19px;line-height:19px;transform:scaleX(0.8992)">7.04.2095 07:09:45</span>
<svg style="left:7px;top:607px" width="13" height="16" viewBox="0 0 13 16"><path fill="#a0a0a0" d="M0 0h10v1h-10zM0 1h1v1h-1zM9 1h2v1h-2zM0 2h1v1h-1zM9 2h1v1h-1zM11 2h1v1h-1zM0 3h1v1h-1zM9 3h4v1h-4zM0 4h1v1h-1zM12 4h1v1h-1zM0 5h1v1h-1zM12 5h1v1h-1zM0 6h1v1h-1zM12 6h1v1h-1zM0 7h1v1h-1zM12 7h1v1h-1zM0 8h1v1h-1zM12 8h1v1h-1zM0 9h1v1h-1zM12 9h1v1h-1zM0 10h1v1h-1zM12 10h1v1h-1zM0 11h1v1h-1zM12 11h1v1h-1zM0 12h1v1h-1zM12 12h1v1h-1zM0 13h1v1h-1zM12 13h1v1h-1zM0 14h1v1h-1zM12 14h1v1h-1z"/><path fill="#f6f6f6" d="M1 1h8v1h-8zM1 2h8v1h-8zM10 2h1v1h-1zM1 3h8v1h-8zM1 4h11v1h-11zM1 5h11v1h-11zM1 6h11v1h-11zM1 7h11v1h-11zM1 8h11v1h-11zM1 9h11v1h-11zM1 10h11v1h-11zM1 11h11v1h-11zM1 12h11v1h-11zM1 13h11v1h-11zM1 14h11v1h-11z"/><path fill="#7a7a7a" d="M0 15h13v1h-13z"/><g shape-rendering="geometricPrecision" stroke="none"><circle cx="5.4" cy="7.4" r="3" fill="#d9ecfb" stroke="#86b4e2" stroke-width=".9"/><circle cx="8.6" cy="10.6" r="1.7" fill="#dcebfa" stroke="#4a7fc2" stroke-width="1"/><g fill="#1f5096"><circle cx="8.40" cy="7.40" r=".62"/><circle cx="7.52" cy="9.52" r=".62"/><circle cx="5.40" cy="10.40" r=".62"/><circle cx="3.28" cy="9.52" r=".62"/><circle cx="2.40" cy="7.40" r=".62"/><circle cx="3.28" cy="5.28" r=".62"/><circle cx="5.40" cy="4.40" r=".62"/><circle cx="7.52" cy="5.28" r=".62"/><circle cx="9.73" cy="11.73" r=".72"/><circle cx="7.47" cy="11.73" r=".72"/><circle cx="7.47" cy="9.47" r=".72"/><circle cx="9.73" cy="9.47" r=".72"/></g><circle cx="8.6" cy="10.6" r=".85" fill="#fff"/><circle cx="4.5" cy="7.4" r=".62" fill="#0c1430"/><circle cx="5.45" cy="6.4" r=".45" fill="#1c3c6c"/><circle cx="5.6" cy="7.7" r=".5" fill="#fff"/></g></svg>
<span class="t" style="left:23.4px;top:607px;height:19px;line-height:19px;transform:scaleX(1.0457)">kdcom.dll</span>
<span class="t" style="left:307px;top:607px;height:19px;line-height:19px;transform:scaleX(0.9567)">fffff803`174d0000</span>
<span class="t" style="left:427px;top:607px;height:19px;line-height:19px;transform:scaleX(0.9673)">fffff803`174db000</span>
<span class="t" style="left:547px;top:607px;height:19px;line-height:19px;transform:scaleX(0.9082)">0x0000b000</span>
<span class="t" style="left:667px;top:607px;height:19px;line-height:19px;transform:scaleX(0.9117)">0x7c46e6c1</span>
<span class="t" style="left:787px;top:607px;height:19px;line-height:19px;transform:scaleX(0.8992)">27.01.2036 05:36:17</span>
<svg style="left:7px;top:626px" width="13" height="16" viewBox="0 0 13 16"><path fill="#a0a0a0" d="M0 0h10v1h-10zM0 1h1v1h-1zM9 1h2v1h-2zM0 2h1v1h-1zM9 2h1v1h-1zM11 2h1v1h-1zM0 3h1v1h-1zM9 3h4v1h-4zM0 4h1v1h-1zM12 4h1v1h-1zM0 5h1v1h-1zM12 5h1v1h-1zM0 6h1v1h-1zM12 6h1v1h-1zM0 7h1v1h-1zM12 7h1v1h-1zM0 8h1v1h-1zM12 8h1v1h-1zM0 9h1v1h-1zM12 9h1v1h-1zM0 10h1v1h-1zM12 10h1v1h-1zM0 11h1v1h-1zM12 11h1v1h-1zM0 12h1v1h-1zM12 12h1v1h-1zM0 13h1v1h-1zM12 13h1v1h-1zM0 14h1v1h-1zM12 14h1v1h-1z"/><path fill="#f6f6f6" d="M1 1h8v1h-8zM1 2h8v1h-8zM10 2h1v1h-1zM1 3h8v1h-8zM1 4h11v1h-11zM1 5h11v1h-11zM1 6h11v1h-11zM1 7h11v1h-11zM1 8h11v1h-11zM1 9h11v1h-11zM1 10h11v1h-11zM1 11h11v1h-11zM1 12h11v1h-11zM1 13h11v1h-11zM1 14h11v1h-11z"/><path fill="#7a7a7a" d="M0 15h13v1h-13z"/><g shape-rendering="geometricPrecision" stroke="none"><circle cx="5.4" cy="7.4" r="3" fill="#d9ecfb" stroke="#86b4e2" stroke-width=".9"/><circle cx="8.6" cy="10.6" r="1.7" fill="#dcebfa" stroke="#4a7fc2" stroke-width="1"/><g fill="#1f5096"><circle cx="8.40" cy="7.40" r=".62"/><circle cx="7.52" cy="9.52" r=".62"/><circle cx="5.40" cy="10.40" r=".62"/><circle cx="3.28" cy="9.52" r=".62"/><circle cx="2.40" cy="7.40" r=".62"/><circle cx="3.28" cy="5.28" r=".62"/><circle cx="5.40" cy="4.40" r=".62"/><circle cx="7.52" cy="5.28" r=".62"/><circle cx="9.73" cy="11.73" r=".72"/><circle cx="7.47" cy="11.73" r=".72"/><circle cx="7.47" cy="9.47" r=".72"/><circle cx="9.73" cy="9.47" r=".72"/></g><circle cx="8.6" cy="10.6" r=".85" fill="#fff"/><circle cx="4.5" cy="7.4" r=".62" fill="#0c1430"/><circle cx="5.45" cy="6.4" r=".45" fill="#1c3c6c"/><circle cx="5.6" cy="7.7" r=".5" fill="#fff"/></g></svg>
<span class="t" style="left:23.4px;top:626px;height:19px;line-height:19px;transform:scaleX(1.0288)">mcupdate.dll</span>
<span class="t" style="left:307px;top:626px;height:19px;line-height:19px;transform:scaleX(0.9528)">fffff803`16ca0000</span>
<span class="t" style="left:427px;top:626px;height:19px;line-height:19px;transform:scaleX(0.9598)">fffff803`16cc7000</span>
<span class="t" style="left:547px;top:626px;height:19px;line-height:19px;transform:scaleX(0.8931)">0x00027000</span>
<span class="t" style="left:667px;top:626px;height:19px;line-height:19px;transform:scaleX(0.9347)">0x65bc13ef</span>
<span class="t" style="left:787px;top:626px;height:19px;line-height:19px;transform:scaleX(0.8992)">1.02.2024 22:58:07</span>
<svg style="left:7px;top:645px" width="13" height="16" viewBox="0 0 13 16"><path fill="#a0a0a0" d="M0 0h10v1h-10zM0 1h1v1h-1zM9 1h2v1h-2zM0 2h1v1h-1zM9 2h1v1h-1zM11 2h1v1h-1zM0 3h1v1h-1zM9 3h4v1h-4zM0 4h1v1h-1zM12 4h1v1h-1zM0 5h1v1h-1zM12 5h1v1h-1zM0 6h1v1h-1zM12 6h1v1h-1zM0 7h1v1h-1zM12 7h1v1h-1zM0 8h1v1h-1zM12 8h1v1h-1zM0 9h1v1h-1zM12 9h1v1h-1zM0 10h1v1h-1zM12 10h1v1h-1zM0 11h1v1h-1zM12 11h1v1h-1zM0 12h1v1h-1zM12 12h1v1h-1zM0 13h1v1h-1zM12 13h1v1h-1zM0 14h1v1h-1zM12 14h1v1h-1z"/><path fill="#f6f6f6" d="M1 1h8v1h-8zM1 2h8v1h-8zM10 2h1v1h-1zM1 3h8v1h-8zM1 4h11v1h-11zM1 5h11v1h-11zM1 6h11v1h-11zM1 7h11v1h-11zM1 8h11v1h-11zM1 9h11v1h-11zM1 10h11v1h-11zM1 11h11v1h-11zM1 12h11v1h-11zM1 13h11v1h-11zM1 14h11v1h-11z"/><path fill="#7a7a7a" d="M0 15h13v1h-13z"/><g shape-rendering="geometricPrecision" stroke="none"><circle cx="5.4" cy="7.4" r="3" fill="#d9ecfb" stroke="#86b4e2" stroke-width=".9"/><circle cx="8.6" cy="10.6" r="1.7" fill="#dcebfa" stroke="#4a7fc2" stroke-width="1"/><g fill="#1f5096"><circle cx="8.40" cy="7.40" r=".62"/><circle cx="7.52" cy="9.52" r=".62"/><circle cx="5.40" cy="10.40" r=".62"/><circle cx="3.28" cy="9.52" r=".62"/><circle cx="2.40" cy="7.40" r=".62"/><circle cx="3.28" cy="5.28" r=".62"/><circle cx="5.40" cy="4.40" r=".62"/><circle cx="7.52" cy="5.28" r=".62"/><circle cx="9.73" cy="11.73" r=".72"/><circle cx="7.47" cy="11.73" r=".72"/><circle cx="7.47" cy="9.47" r=".72"/><circle cx="9.73" cy="9.47" r=".72"/></g><circle cx="8.6" cy="10.6" r=".85" fill="#fff"/><circle cx="4.5" cy="7.4" r=".62" fill="#0c1430"/><circle cx="5.45" cy="6.4" r=".45" fill="#1c3c6c"/><circle cx="5.6" cy="7.7" r=".5" fill="#fff"/></g></svg>
<span class="t" style="left:23.4px;top:645px;height:19px;line-height:19px;transform:scaleX(1.0239)">symcryptk.dll</span>
<span class="t" style="left:307px;top:645px;height:19px;line-height:19px;transform:scaleX(0.9460)">fffff803`174e0000</span>
<span class="t" style="left:427px;top:645px;height:19px;line-height:19px;transform:scaleX(0.9528)">fffff803`174ec000</span>
<span class="t" style="left:547px;top:645px;height:19px;line-height:19px;transform:scaleX(0.9023)">0x0000c000</span>
<span class="t" style="left:667px;top:645px;height:19px;line-height:19px;transform:scaleX(0.9247)">0xb5e1261f</span>
<span class="t" style="left:787px;top:645px;height:19px;line-height:19px;transform:scaleX(0.8992)">11.09.2066 12:50:55</span>
<svg style="left:7px;top:664px" width="13" height="16" viewBox="0 0 13 16"><path fill="#a0a0a0" d="M0 0h10v1h-10zM0 1h1v1h-1zM9 1h2v1h-2zM0 2h1v1h-1zM9 2h1v1h-1zM11 2h1v1h-1zM0 3h1v1h-1zM9 3h4v1h-4zM0 4h1v1h-1zM12 4h1v1h-1zM0 5h1v1h-1zM12 5h1v1h-1zM0 6h1v1h-1zM12 6h1v1h-1zM0 7h1v1h-1zM12 7h1v1h-1zM0 8h1v1h-1zM12 8h1v1h-1zM0 9h1v1h-1zM12 9h1v1h-1zM0 10h1v1h-1zM12 10h1v1h-1zM0 11h1v1h-1zM12 11h1v1h-1zM0 12h1v1h-1zM12 12h1v1h-1zM0 13h1v1h-1zM12 13h1v1h-1zM0 14h1v1h-1zM12 14h1v1h-1z"/><path fill="#f6f6f6" d="M1 1h8v1h-8zM1 2h8v1h-8zM10 2h1v1h-1zM1 3h8v1h-8zM1 4h11v1h-11zM1 5h11v1h-11zM1 6h11v1h-11zM1 7h11v1h-11zM1 8h11v1h-11zM1 9h11v1h-11zM1 10h11v1h-11zM1 11h11v1h-11zM1 12h11v1h-11zM1 13h11v1h-11zM1 14h11v1h-11z"/><path fill="#7a7a7a" d="M0 15h13v1h-13z"/><g shape-rendering="geometricPrecision" stroke="none"><circle cx="5.4" cy="7.4" r="3" fill="#d9ecfb" stroke="#86b4e2" stroke-width=".9"/><circle cx="8.6" cy="10.6" r="1.7" fill="#dcebfa" stroke="#4a7fc2" stroke-width="1"/><g fill="#1f5096"><circle cx="8.40" cy="7.40" r=".62"/><circle cx="7.52" cy="9.52" r=".62"/><circle cx="5.40" cy="10.40" r=".62"/><circle cx="3.28" cy="9.52" r=".62"/><circle cx="2.40" cy="7.40" r=".62"/><circle cx="3.28" cy="5.28" r=".62"/><circle cx="5.40" cy="4.40" r=".62"/><circle cx="7.52" cy="5.28" r=".62"/><circle cx="9.73" cy="11.73" r=".72"/><circle cx="7.47" cy="11.73" r=".72"/><circle cx="7.47" cy="9.47" r=".72"/><circle cx="9.73" cy="9.47" r=".72"/></g><circle cx="8.6" cy="10.6" r=".85" fill="#fff"/><circle cx="4.5" cy="7.4" r=".62" fill="#0c1430"/><circle cx="5.45" cy="6.4" r=".45" fill="#1c3c6c"/><circle cx="5.6" cy="7.7" r=".5" fill="#fff"/></g></svg>
<span class="t" style="left:23.4px;top:664px;height:19px;line-height:19px;transform:scaleX(0.9587)">cng.sys</span>
<span class="t" style="left:307px;top:664px;height:19px;line-height:19px;transform:scaleX(0.9567)">fffff803`175b0000</span>
<span class="t" style="left:427px;top:664px;height:19px;line-height:19px;transform:scaleX(0.9460)">fffff803`17690000</span>
<span class="t" style="left:547px;top:664px;height:19px;line-height:19px;transform:scaleX(0.8931)">0x000e0000</span>
<span class="t" style="left:667px;top:664px;height:19px;line-height:19px;transform:scaleX(0.8931)">0x4682a55a</span>
<span class="t" style="left:787px;top:664px;height:19px;line-height:19px;transform:scaleX(0.8992)">27.06.2007 18:58:50</span>
<svg style="left:7px;top:683px" width="13" height="16" viewBox="0 0 13 16"><path fill="#a0a0a0" d="M0 0h10v1h-10zM0 1h1v1h-1zM9 1h2v1h-2zM0 2h1v1h-1zM9 2h1v1h-1zM11 2h1v1h-1zM0 3h1v1h-1zM9 3h4v1h-4zM0 4h1v1h-1zM12 4h1v1h-1zM0 5h1v1h-1zM12 5h1v1h-1zM0 6h1v1h-1zM12 6h1v1h-1zM0 7h1v1h-1zM12 7h1v1h-1zM0 8h1v1h-1zM12 8h1v1h-1zM0 9h1v1h-1zM12 9h1v1h-1zM0 10h1v1h-1zM12 10h1v1h-1zM0 11h1v1h-1zM12 11h1v1h-1zM0 12h1v1h-1zM12 12h1v1h-1zM0 13h1v1h-1zM12 13h1v1h-1zM0 14h1v1h-1zM12 14h1v1h-1z"/><path fill="#f6f6f6" d="M1 1h8v1h-8zM1 2h8v1h-8zM10 2h1v1h-1zM1 3h8v1h-8zM1 4h11v1h-11zM1 5h11v1h-11zM1 6h11v1h-11zM1 7h11v1h-11zM1 8h11v1h-11zM1 9h11v1h-11zM1 10h11v1h-11zM1 11h11v1h-11zM1 12h11v1h-11zM1 13h11v1h-11zM1 14h11v1h-11z"/><path fill="#7a7a7a" d="M0 15h13v1h-13z"/><g shape-rendering="geometricPrecision" stroke="none"><circle cx="5.4" cy="7.4" r="3" fill="#d9ecfb" stroke="#86b4e2" stroke-width=".9"/><circle cx="8.6" cy="10.6" r="1.7" fill="#dcebfa" stroke="#4a7fc2" stroke-width="1"/><g fill="#1f5096"><circle cx="8.40" cy="7.40" r=".62"/><circle cx="7.52" cy="9.52" r=".62"/><circle cx="5.40" cy="10.40" r=".62"/><circle cx="3.28" cy="9.52" r=".62"/><circle cx="2.40" cy="7.40" r=".62"/><circle cx="3.28" cy="5.28" r=".62"/><circle cx="5.40" cy="4.40" r=".62"/><circle cx="7.52" cy="5.28" r=".62"/><circle cx="9.73" cy="11.73" r=".72"/><circle cx="7.47" cy="11.73" r=".72"/><circle cx="7.47" cy="9.47" r=".72"/><circle cx="9.73" cy="9.47" r=".72"/></g><circle cx="8.6" cy="10.6" r=".85" fill="#fff"/><circle cx="4.5" cy="7.4" r=".62" fill="#0c1430"/><circle cx="5.45" cy="6.4" r=".45" fill="#1c3c6c"/><circle cx="5.6" cy="7.7" r=".5" fill="#fff"/></g></svg>
<span class="t" style="left:23.4px;top:683px;height:19px;line-height:19px;transform:scaleX(0.8101)">CLFS.SYS</span>
<span class="t" style="left:307px;top:683px;height:19px;line-height:19px;transform:scaleX(0.9460)">fffff803`17520000</span>
<span class="t" style="left:427px;top:683px;height:19px;line-height:19px;transform:scaleX(0.9528)">fffff803`175ac000</span>
<span class="t" style="left:547px;top:683px;height:19px;line-height:19px;transform:scaleX(0.9023)">0x0008c000</span>
<span class="t" style="left:667px;top:683px;height:19px;line-height:19px;transform:scaleX(0.9271)">0x4c76c7ed</span>
<span class="t" style="left:787px;top:683px;height:19px;line-height:19px;transform:scaleX(0.8992)">26.08.2010 21:00:45</span>
<svg style="left:7px;top:702px" width="13" height="16" viewBox="0 0 13 16"><path fill="#a0a0a0" d="M0 0h10v1h-10zM0 1h1v1h-1zM9 1h2v1h-2zM0 2h1v1h-1zM9 2h1v1h-1zM11 2h1v1h-1zM0 3h1v1h-1zM9 3h4v1h-4zM0 4h1v1h-1zM12 4h1v1h-1zM0 5h1v1h-1zM12 5h1v1h-1zM0 6h1v1h-1zM12 6h1v1h-1zM0 7h1v1h-1zM12 7h1v1h-1zM0 8h1v1h-1zM12 8h1v1h-1zM0 9h1v1h-1zM12 9h1v1h-1zM0 10h1v1h-1zM12 10h1v1h-1zM0 11h1v1h-1zM12 11h1v1h-1zM0 12h1v1h-1zM12 12h1v1h-1zM0 13h1v1h-1zM12 13h1v1h-1zM0 14h1v1h-1zM12 14h1v1h-1z"/><path fill="#f6f6f6" d="M1 1h8v1h-8zM1 2h8v1h-8zM10 2h1v1h-1zM1 3h8v1h-8zM1 4h11v1h-11zM1 5h11v1h-11zM1 6h11v1h-11zM1 7h11v1h-11zM1 8h11v1h-11zM1 9h11v1h-11zM1 10h11v1h-11zM1 11h11v1h-11zM1 12h11v1h-11zM1 13h11v1h-11zM1 14h11v1h-11z"/><path fill="#7a7a7a" d="M0 15h13v1h-13z"/><g shape-rendering="geometricPrecision" stroke="none"><circle cx="5.4" cy="7.4" r="3" fill="#d9ecfb" stroke="#86b4e2" stroke-width=".9"/><circle cx="8.6" cy="10.6" r="1.7" fill="#dcebfa" stroke="#4a7fc2" stroke-width="1"/><g fill="#1f5096"><circle cx="8.40" cy="7.40" r=".62"/><circle cx="7.52" cy="9.52" r=".62"/><circle cx="5.40" cy="10.40" r=".62"/><circle cx="3.28" cy="9.52" r=".62"/><circle cx="2.40" cy="7.40" r=".62"/><circle cx="3.28" cy="5.28" r=".62"/><circle cx="5.40" cy="4.40" r=".62"/><circle cx="7.52" cy="5.28" r=".62"/><circle cx="9.73" cy="11.73" r=".72"/><circle cx="7.47" cy="11.73" r=".72"/><circle cx="7.47" cy="9.47" r=".72"/><circle cx="9.73" cy="9.47" r=".72"/></g><circle cx="8.6" cy="10.6" r=".85" fill="#fff"/><circle cx="4.5" cy="7.4" r=".62" fill="#0c1430"/><circle cx="5.45" cy="6.4" r=".45" fill="#1c3c6c"/><circle cx="5.6" cy="7.7" r=".5" fill="#fff"/></g></svg>
<span class="t" style="left:23.4px;top:702px;height:19px;line-height:19px;transform:scaleX(0.9808)">tm.sys</span>
<span class="t" style="left:307px;top:702px;height:19px;line-height:19px;transform:scaleX(0.9588)">fffff803`174f0000</span>
<span class="t" style="left:427px;top:702px;height:19px;line-height:19px;transform:scaleX(0.9528)">fffff803`1751c000</span>
<span class="t" style="left:547px;top:702px;height:19px;line-height:19px;transform:scaleX(0.9023)">0x0002c000</span>
<span class="t" style="left:667px;top:702px;height:19px;line-height:19px;transform:scaleX(0.9082)">0x089d3444</span>
<svg style="left:7px;top:721px" width="13" height="16" viewBox="0 0 13 16"><path fill="#a0a0a0" d="M0 0h10v1h-10zM0 1h1v1h-1zM9 1h2v1h-2zM0 2h1v1h-1zM9 2h1v1h-1zM11 2h1v1h-1zM0 3h1v1h-1zM9 3h4v1h-4zM0 4h1v1h-1zM12 4h1v1h-1zM0 5h1v1h-1zM12 5h1v1h-1zM0 6h1v1h-1zM12 6h1v1h-1zM0 7h1v1h-1zM12 7h1v1h-1zM0 8h1v1h-1zM12 8h1v1h-1zM0 9h1v1h-1zM12 9h1v1h-1zM0 10h1v1h-1zM12 10h1v1h-1zM0 11h1v1h-1zM12 11h1v1h-1zM0 12h1v1h-1zM12 12h1v1h-1zM0 13h1v1h-1zM12 13h1v1h-1zM0 14h1v1h-1zM12 14h1v1h-1z"/><path fill="#f6f6f6" d="M1 1h8v1h-8zM1 2h8v1h-8zM10 2h1v1h-1zM1 3h8v1h-8zM1 4h11v1h-11zM1 5h11v1h-11zM1 6h11v1h-11zM1 7h11v1h-11zM1 8h11v1h-11zM1 9h11v1h-11zM1 10h11v1h-11zM1 11h11v1h-11zM1 12h11v1h-11zM1 13h11v1h-11zM1 14h11v1h-11z"/><path fill="#7a7a7a" d="M0 15h13v1h-13z"/><g shape-rendering="geometricPrecision" stroke="none"><circle cx="5.4" cy="7.4" r="3" fill="#d9ecfb" stroke="#86b4e2" stroke-width=".9"/><circle cx="8.6" cy="10.6" r="1.7" fill="#dcebfa" stroke="#4a7fc2" stroke-width="1"/><g fill="#1f5096"><circle cx="8.40" cy="7.40" r=".62"/><circle cx="7.52" cy="9.52" r=".62"/><circle cx="5.40" cy="10.40" r=".62"/><circle cx="3.28" cy="9.52" r=".62"/><circle cx="2.40" cy="7.40" r=".62"/><circle cx="3.28" cy="5.28" r=".62"/><circle cx="5.40" cy="4.40" r=".62"/><circle cx="7.52" cy="5.28" r=".62"/><circle cx="9.73" cy="11.73" r=".72"/><circle cx="7.47" cy="11.73" r=".72"/><circle cx="7.47" cy="9.47" r=".72"/><circle cx="9.73" cy="9.47" r=".72"/></g><circle cx="8.6" cy="10.6" r=".85" fill="#fff"/><circle cx="4.5" cy="7.4" r=".62" fill="#0c1430"/><circle cx="5.45" cy="6.4" r=".45" fill="#1c3c6c"/><circle cx="5.6" cy="7.7" r=".5" fill="#fff"/></g></svg>
<span class="t" style="left:23.4px;top:721px;height:19px;line-height:19px;transform:scaleX(0.9651)">winaccel.sys</span>
<span class="t" style="left:307px;top:721px;height:19px;line-height:19px;transform:scaleX(0.9460)">fffff803`176a0000</span>
<span class="t" style="left:427px;top:721px;height:19px;line-height:19px;transform:scaleX(0.9567)">fffff803`176b5000</span>
<span class="t" style="left:547px;top:721px;height:19px;line-height:19px;transform:scaleX(0.8931)">0x00015000</span>
<span class="t" style="left:667px;top:721px;height:19px;line-height:19px;transform:scaleX(0.9430)">0xff85d401</span>
<span class="t" style="left:787px;top:721px;height:19px;line-height:19px;transform:scaleX(0.8992)">6.11.2105 15:24:01</span>
<svg style="left:7px;top:740px" width="13" height="16" viewBox="0 0 13 16"><path fill="#a0a0a0" d="M0 0h10v1h-10zM0 1h1v1h-1zM9 1h2v1h-2zM0 2h1v1h-1zM9 2h1v1h-1zM11 2h1v1h-1zM0 3h1v1h-1zM9 3h4v1h-4zM0 4h1v1h-1zM12 4h1v1h-1zM0 5h1v1h-1zM12 5h1v1h-1zM0 6h1v1h-1zM12 6h1v1h-1zM0 7h1v1h-1zM12 7h1v1h-1zM0 8h1v1h-1zM12 8h1v1h-1zM0 9h1v1h-1zM12 9h1v1h-1zM0 10h1v1h-1zM12 10h1v1h-1zM0 11h1v1h-1zM12 11h1v1h-1zM0 12h1v1h-1zM12 12h1v1h-1zM0 13h1v1h-1zM12 13h1v1h-1zM0 14h1v1h-1zM12 14h1v1h-1z"/><path fill="#f6f6f6" d="M1 1h8v1h-8zM1 2h8v1h-8zM10 2h1v1h-1zM1 3h8v1h-8zM1 4h11v1h-11zM1 5h11v1h-11zM1 6h11v1h-11zM1 7h11v1h-11zM1 8h11v1h-11zM1 9h11v1h-11zM1 10h11v1h-11zM1 11h11v1h-11zM1 12h11v1h-11zM1 13h11v1h-11zM1 14h11v1h-11z"/><path fill="#7a7a7a" d="M0 15h13v1h-13z"/><g shape-rendering="geometricPrecision" stroke="none"><circle cx="5.4" cy="7.4" r="3" fill="#d9ecfb" stroke="#86b4e2" stroke-width=".9"/><circle cx="8.6" cy="10.6" r="1.7" fill="#dcebfa" stroke="#4a7fc2" stroke-width="1"/><g fill="#1f5096"><circle cx="8.40" cy="7.40" r=".62"/><circle cx="7.52" cy="9.52" r=".62"/><circle cx="5.40" cy="10.40" r=".62"/><circle cx="3.28" cy="9.52" r=".62"/><circle cx="2.40" cy="7.40" r=".62"/><circle cx="3.28" cy="5.28" r=".62"/><circle cx="5.40" cy="4.40" r=".62"/><circle cx="7.52" cy="5.28" r=".62"/><circle cx="9.73" cy="11.73" r=".72"/><circle cx="7.47" cy="11.73" r=".72"/><circle cx="7.47" cy="9.47" r=".72"/><circle cx="9.73" cy="9.47" r=".72"/></g><circle cx="8.6" cy="10.6" r=".85" fill="#fff"/><circle cx="4.5" cy="7.4" r=".62" fill="#0c1430"/><circle cx="5.45" cy="6.4" r=".45" fill="#1c3c6c"/><circle cx="5.6" cy="7.7" r=".5" fill="#fff"/></g></svg>
<span class="t" style="left:23.4px;top:740px;height:19px;line-height:19px;transform:scaleX(0.9174)">PSHED.dll</span>
<span class="t" style="left:307px;top:740px;height:19px;line-height:19px;transform:scaleX(0.9528)">fffff803`176c0000</span>
<span class="t" style="left:427px;top:740px;height:19px;line-height:19px;transform:scaleX(0.9673)">fffff803`176db000</span>
<span class="t" style="left:547px;top:740px;height:19px;line-height:19px;transform:scaleX(0.9082)">0x0001b000</span>
<span class="t" style="left:667px;top:740px;height:19px;line-height:19px;transform:scaleX(0.9271)">0xc3d34e7c</span>
<span class="t" style="left:787px;top:740px;height:19px;line-height:19px;transform:scaleX(0.8992)">9.02.2074 13:35:08</span>
<span class="t" style="left:907px;top:740px;height:19px;line-height:19px;transform:scaleX(0.9697)">System operacyjny...</span>
<span class="t" style="left:1027px;top:740px;height:19px;line-height:19px;transform:scaleX(0.9871)">Sterownik błędów ...</span>
<svg style="left:7px;top:759px" width="13" height="16" viewBox="0 0 13 16"><path fill="#a0a0a0" d="M0 0h10v1h-10zM0 1h1v1h-1zM9 1h2v1h-2zM0 2h1v1h-1zM9 2h1v1h-1zM11 2h1v1h-1zM0 3h1v1h-1zM9 3h4v1h-4zM0 4h1v1h-1zM12 4h1v1h-1zM0 5h1v1h-1zM12 5h1v1h-1zM0 6h1v1h-1zM12 6h1v1h-1zM0 7h1v1h-1zM12 7h1v1h-1zM0 8h1v1h-1zM12 8h1v1h-1zM0 9h1v1h-1zM12 9h1v1h-1zM0 10h1v1h-1zM12 10h1v1h-1zM0 11h1v1h-1zM12 11h1v1h-1zM0 12h1v1h-1zM12 12h1v1h-1zM0 13h1v1h-1zM12 13h1v1h-1zM0 14h1v1h-1zM12 14h1v1h-1z"/><path fill="#f6f6f6" d="M1 1h8v1h-8zM1 2h8v1h-8zM10 2h1v1h-1zM1 3h8v1h-8zM1 4h11v1h-11zM1 5h11v1h-11zM1 6h11v1h-11zM1 7h11v1h-11zM1 8h11v1h-11zM1 9h11v1h-11zM1 10h11v1h-11zM1 11h11v1h-11zM1 12h11v1h-11zM1 13h11v1h-11zM1 14h11v1h-11z"/><path fill="#7a7a7a" d="M0 15h13v1h-13z"/><g shape-rendering="geometricPrecision" stroke="none"><circle cx="5.4" cy="7.4" r="3" fill="#d9ecfb" stroke="#86b4e2" stroke-width=".9"/><circle cx="8.6" cy="10.6" r="1.7" fill="#dcebfa" stroke="#4a7fc2" stroke-width="1"/><g fill="#1f5096"><circle cx="8.40" cy="7.40" r=".62"/><circle cx="7.52" cy="9.52" r=".62"/><circle cx="5.40" cy="10.40" r=".62"/><circle cx="3.28" cy="9.52" r=".62"/><circle cx="2.40" cy="7.40" r=".62"/><circle cx="3.28" cy="5.28" r=".62"/><circle cx="5.40" cy="4.40" r=".62"/><circle cx="7.52" cy="5.28" r=".62"/><circle cx="9.73" cy="11.73" r=".72"/><circle cx="7.47" cy="11.73" r=".72"/><circle cx="7.47" cy="9.47" r=".72"/><circle cx="9.73" cy="9.47" r=".72"/></g><circle cx="8.6" cy="10.6" r=".85" fill="#fff"/><circle cx="4.5" cy="7.4" r=".62" fill="#0c1430"/><circle cx="5.45" cy="6.4" r=".45" fill="#1c3c6c"/><circle cx="5.6" cy="7.7" r=".5" fill="#fff"/></g></svg>
<span class="t" style="left:23.4px;top:759px;height:19px;line-height:19px;transform:scaleX(0.9518)">BOOTVID.dll</span>
<span class="t" style="left:307px;top:759px;height:19px;line-height:19px;transform:scaleX(0.9460)">fffff803`176e0000</span>
<span class="t" style="left:427px;top:759px;height:19px;line-height:19px;transform:scaleX(0.9567)">fffff803`176ed000</span>
<span class="t" style="left:547px;top:759px;height:19px;line-height:19px;transform:scaleX(0.9082)">0x0000d000</span>
<span class="t" style="left:667px;top:759px;height:19px;line-height:19px;transform:scaleX(0.9082)">0x6e4a77d6</span>
<span class="t" style="left:787px;top:759px;height:19px;line-height:19px;transform:scaleX(0.8992)">20.08.2028 09:48:22</span>
<svg style="left:7px;top:778px" width="13" height="16" viewBox="0 0 13 16"><path fill="#a0a0a0" d="M0 0h10v1h-10zM0 1h1v1h-1zM9 1h2v1h-2zM0 2h1v1h-1zM9 2h1v1h-1zM11 2h1v1h-1zM0 3h1v1h-1zM9 3h4v1h-4zM0 4h1v1h-1zM12 4h1v1h-1zM0 5h1v1h-1zM12 5h1v1h-1zM0 6h1v1h-1zM12 6h1v1h-1zM0 7h1v1h-1zM12 7h1v1h-1zM0 8h1v1h-1zM12 8h1v1h-1zM0 9h1v1h-1zM12 9h1v1h-1zM0 10h1v1h-1zM12 10h1v1h-1zM0 11h1v1h-1zM12 11h1v1h-1zM0 12h1v1h-1zM12 12h1v1h-1zM0 13h1v1h-1zM12 13h1v1h-1zM0 14h1v1h-1zM12 14h1v1h-1z"/><path fill="#f6f6f6" d="M1 1h8v1h-8zM1 2h8v1h-8zM10 2h1v1h-1zM1 3h8v1h-8zM1 4h11v1h-11zM1 5h11v1h-11zM1 6h11v1h-11zM1 7h11v1h-11zM1 8h11v1h-11zM1 9h11v1h-11zM1 10h11v1h-11zM1 11h11v1h-11zM1 12h11v1h-11zM1 13h11v1h-11zM1 14h11v1h-11z"/><path fill="#7a7a7a" d="M0 15h13v1h-13z"/><g shape-rendering="geometricPrecision" stroke="none"><circle cx="5.4" cy="7.4" r="3" fill="#d9ecfb" stroke="#86b4e2" stroke-width=".9"/><circle cx="8.6" cy="10.6" r="1.7" fill="#dcebfa" stroke="#4a7fc2" stroke-width="1"/><g fill="#1f5096"><circle cx="8.40" cy="7.40" r=".62"/><circle cx="7.52" cy="9.52" r=".62"/><circle cx="5.40" cy="10.40" r=".62"/><circle cx="3.28" cy="9.52" r=".62"/><circle cx="2.40" cy="7.40" r=".62"/><circle cx="3.28" cy="5.28" r=".62"/><circle cx="5.40" cy="4.40" r=".62"/><circle cx="7.52" cy="5.28" r=".62"/><circle cx="9.73" cy="11.73" r=".72"/><circle cx="7.47" cy="11.73" r=".72"/><circle cx="7.47" cy="9.47" r=".72"/><circle cx="9.73" cy="9.47" r=".72"/></g><circle cx="8.6" cy="10.6" r=".85" fill="#fff"/><circle cx="4.5" cy="7.4" r=".62" fill="#0c1430"/><circle cx="5.45" cy="6.4" r=".45" fill="#1c3c6c"/><circle cx="5.6" cy="7.7" r=".5" fill="#fff"/></g></svg>
<span class="t" style="left:23.4px;top:778px;height:19px;line-height:19px;transform:scaleX(0.8738)">FLTMGR.SYS</span>
<span class="t" style="left:307px;top:778px;height:19px;line-height:19px;transform:scaleX(0.9460)">fffff803`17810000</span>
<span class="t" style="left:427px;top:778px;height:19px;line-height:19px;transform:scaleX(0.9460)">fffff803`178a5000</span>
<span class="t" style="left:547px;top:778px;height:19px;line-height:19px;transform:scaleX(0.8931)">0x00095000</span>
<span class="t" style="left:667px;top:778px;height:19px;line-height:19px;transform:scaleX(0.9287)">0x8fce603c</span>
<span class="t" style="left:787px;top:778px;height:19px;line-height:19px;transform:scaleX(0.8992)">15.06.2046 10:15:40</span>
<svg style="left:7px;top:797px" width="13" height="16" viewBox="0 0 13 16"><path fill="#a0a0a0" d="M0 0h10v1h-10zM0 1h1v1h-1zM9 1h2v1h-2zM0 2h1v1h-1zM9 2h1v1h-1zM11 2h1v1h-1zM0 3h1v1h-1zM9 3h4v1h-4zM0 4h1v1h-1zM12 4h1v1h-1zM0 5h1v1h-1zM12 5h1v1h-1zM0 6h1v1h-1zM12 6h1v1h-1zM0 7h1v1h-1zM12 7h1v1h-1zM0 8h1v1h-1zM12 8h1v1h-1zM0 9h1v1h-1zM12 9h1v1h-1zM0 10h1v1h-1zM12 10h1v1h-1zM0 11h1v1h-1zM12 11h1v1h-1zM0 12h1v1h-1zM12 12h1v1h-1zM0 13h1v1h-1zM12 13h1v1h-1zM0 14h1v1h-1zM12 14h1v1h-1z"/><path fill="#f6f6f6" d="M1 1h8v1h-8zM1 2h8v1h-8zM10 2h1v1h-1zM1 3h8v1h-8zM1 4h11v1h-11zM1 5h11v1h-11zM1 6h11v1h-11zM1 7h11v1h-11zM1 8h11v1h-11zM1 9h11v1h-11zM1 10h11v1h-11zM1 11h11v1h-11zM1 12h11v1h-11zM1 13h11v1h-11zM1 14h11v1h-11z"/><path fill="#7a7a7a" d="M0 15h13v1h-13z"/><g shape-rendering="geometricPrecision" stroke="none"><circle cx="5.4" cy="7.4" r="3" fill="#d9ecfb" stroke="#86b4e2" stroke-width=".9"/><circle cx="8.6" cy="10.6" r="1.7" fill="#dcebfa" stroke="#4a7fc2" stroke-width="1"/><g fill="#1f5096"><circle cx="8.40" cy="7.40" r=".62"/><circle cx="7.52" cy="9.52" r=".62"/><circle cx="5.40" cy="10.40" r=".62"/><circle cx="3.28" cy="9.52" r=".62"/><circle cx="2.40" cy="7.40" r=".62"/><circle cx="3.28" cy="5.28" r=".62"/><circle cx="5.40" cy="4.40" r=".62"/><circle cx="7.52" cy="5.28" r=".62"/><circle cx="9.73" cy="11.73" r=".72"/><circle cx="7.47" cy="11.73" r=".72"/><circle cx="7.47" cy="9.47" r=".72"/><circle cx="9.73" cy="9.47" r=".72"/></g><circle cx="8.6" cy="10.6" r=".85" fill="#fff"/><circle cx="4.5" cy="7.4" r=".62" fill="#0c1430"/><circle cx="5.45" cy="6.4" r=".45" fill="#1c3c6c"/><circle cx="5.6" cy="7.7" r=".5" fill="#fff"/></g></svg>
<span class="t" style="left:23.4px;top:797px;height:19px;line-height:19px;transform:scaleX(0.9630)">msrpc.sys</span>
<span class="t" style="left:307px;top:797px;height:19px;line-height:19px;transform:scaleX(0.9588)">fffff803`178f0000</span>
<span class="t" style="left:427px;top:797px;height:19px;line-height:19px;transform:scaleX(0.9460)">fffff803`17952000</span>
<span class="t" style="left:547px;top:797px;height:19px;line-height:19px;transform:scaleX(0.8931)">0x00062000</span>
<span class="t" style="left:667px;top:797px;height:19px;line-height:19px;transform:scaleX(0.9406)">0x1b9fd221</span>
<svg style="left:7px;top:816px" width="13" height="16" viewBox="0 0 13 16"><path fill="#a0a0a0" d="M0 0h10v1h-10zM0 1h1v1h-1zM9 1h2v1h-2zM0 2h1v1h-1zM9 2h1v1h-1zM11 2h1v1h-1zM0 3h1v1h-1zM9 3h4v1h-4zM0 4h1v1h-1zM12 4h1v1h-1zM0 5h1v1h-1zM12 5h1v1h-1zM0 6h1v1h-1zM12 6h1v1h-1zM0 7h1v1h-1zM12 7h1v1h-1zM0 8h1v1h-1zM12 8h1v1h-1zM0 9h1v1h-1zM12 9h1v1h-1zM0 10h1v1h-1zM12 10h1v1h-1zM0 11h1v1h-1zM12 11h1v1h-1zM0 12h1v1h-1zM12 12h1v1h-1zM0 13h1v1h-1zM12 13h1v1h-1zM0 14h1v1h-1zM12 14h1v1h-1z"/><path fill="#f6f6f6" d="M1 1h8v1h-8zM1 2h8v1h-8zM10 2h1v1h-1zM1 3h8v1h-8zM1 4h11v1h-11zM1 5h11v1h-11zM1 6h11v1h-11zM1 7h11v1h-11zM1 8h11v1h-11zM1 9h11v1h-11zM1 10h11v1h-11zM1 11h11v1h-11zM1 12h11v1h-11zM1 13h11v1h-11zM1 14h11v1h-11z"/><path fill="#7a7a7a" d="M0 15h13v1h-13z"/><g shape-rendering="geometricPrecision" stroke="none"><circle cx="5.4" cy="7.4" r="3" fill="#d9ecfb" stroke="#86b4e2" stroke-width=".9"/><circle cx="8.6" cy="10.6" r="1.7" fill="#dcebfa" stroke="#4a7fc2" stroke-width="1"/><g fill="#1f5096"><circle cx="8.40" cy="7.40" r=".62"/><circle cx="7.52" cy="9.52" r=".62"/><circle cx="5.40" cy="10.40" r=".62"/><circle cx="3.28" cy="9.52" r=".62"/><circle cx="2.40" cy="7.40" r=".62"/><circle cx="3.28" cy="5.28" r=".62"/><circle cx="5.40" cy="4.40" r=".62"/><circle cx="7.52" cy="5.28" r=".62"/><circle cx="9.73" cy="11.73" r=".72"/><circle cx="7.47" cy="11.73" r=".72"/><circle cx="7.47" cy="9.47" r=".72"/><circle cx="9.73" cy="9.47" r=".72"/></g><circle cx="8.6" cy="10.6" r=".85" fill="#fff"/><circle cx="4.5" cy="7.4" r=".62" fill="#0c1430"/><circle cx="5.45" cy="6.4" r=".45" fill="#1c3c6c"/><circle cx="5.6" cy="7.7" r=".5" fill="#fff"/></g></svg>
<span class="t" style="left:23.4px;top:816px;height:19px;line-height:19px;transform:scaleX(0.9435)">ksecdd.sys</span>
<span class="t" style="left:307px;top:816px;height:19px;line-height:19px;transform:scaleX(0.9567)">fffff803`178b0000</span>
<span class="t" style="left:427px;top:816px;height:19px;line-height:19px;transform:scaleX(0.9460)">fffff803`178e1000</span>
<span class="t" style="left:547px;top:816px;height:19px;line-height:19px;transform:scaleX(0.8931)">0x00031000</span>
<span class="t" style="left:667px;top:816px;height:19px;line-height:19px;transform:scaleX(0.9566)">0x8ebb62df</span>
<span class="t" style="left:787px;top:816px;height:19px;line-height:19px;transform:scaleX(0.8992)">18.11.2045 20:13:35</span>
<svg style="left:7px;top:835px" width="13" height="16" viewBox="0 0 13 16"><path fill="#a0a0a0" d="M0 0h10v1h-10zM0 1h1v1h-1zM9 1h2v1h-2zM0 2h1v1h-1zM9 2h1v1h-1zM11 2h1v1h-1zM0 3h1v1h-1zM9 3h4v1h-4zM0 4h1v1h-1zM12 4h1v1h-1zM0 5h1v1h-1zM12 5h1v1h-1zM0 6h1v1h-1zM12 6h1v1h-1zM0 7h1v1h-1zM12 7h1v1h-1zM0 8h1v1h-1zM12 8h1v1h-1zM0 9h1v1h-1zM12 9h1v1h-1zM0 10h1v1h-1zM12 10h1v1h-1zM0 11h1v1h-1zM12 11h1v1h-1zM0 12h1v1h-1zM12 12h1v1h-1zM0 13h1v1h-1zM12 13h1v1h-1zM0 14h1v1h-1zM12 14h1v1h-1z"/><path fill="#f6f6f6" d="M1 1h8v1h-8zM1 2h8v1h-8zM10 2h1v1h-1zM1 3h8v1h-8zM1 4h11v1h-11zM1 5h11v1h-11zM1 6h11v1h-11zM1 7h11v1h-11zM1 8h11v1h-11zM1 9h11v1h-11zM1 10h11v1h-11zM1 11h11v1h-11zM1 12h11v1h-11zM1 13h11v1h-11zM1 14h11v1h-11z"/><path fill="#7a7a7a" d="M0 15h13v1h-13z"/><g shape-rendering="geometricPrecision" stroke="none"><circle cx="5.4" cy="7.4" r="3" fill="#d9ecfb" stroke="#86b4e2" stroke-width=".9"/><circle cx="8.6" cy="10.6" r="1.7" fill="#dcebfa" stroke="#4a7fc2" stroke-width="1"/><g fill="#1f5096"><circle cx="8.40" cy="7.40" r=".62"/><circle cx="7.52" cy="9.52" r=".62"/><circle cx="5.40" cy="10.40" r=".62"/><circle cx="3.28" cy="9.52" r=".62"/><circle cx="2.40" cy="7.40" r=".62"/><circle cx="3.28" cy="5.28" r=".62"/><circle cx="5.40" cy="4.40" r=".62"/><circle cx="7.52" cy="5.28" r=".62"/><circle cx="9.73" cy="11.73" r=".72"/><circle cx="7.47" cy="11.73" r=".72"/><circle cx="7.47" cy="9.47" r=".72"/><circle cx="9.73" cy="9.47" r=".72"/></g><circle cx="8.6" cy="10.6" r=".85" fill="#fff"/><circle cx="4.5" cy="7.4" r=".62" fill="#0c1430"/><circle cx="5.45" cy="6.4" r=".45" fill="#1c3c6c"/><circle cx="5.6" cy="7.7" r=".5" fill="#fff"/></g></svg>
<span class="t" style="left:23.4px;top:835px;height:19px;line-height:19px;transform:scaleX(0.9613)">clipsp.sys</span>
<span class="t" style="left:307px;top:835px;height:19px;line-height:19px;transform:scaleX(0.9588)">fffff803`176f0000</span>
<span class="t" style="left:427px;top:835px;height:19px;line-height:19px;transform:scaleX(0.9460)">fffff803`17804000</span>
<span class="t" style="left:547px;top:835px;height:19px;line-height:19px;transform:scaleX(0.8931)">0x00114000</span>
<span class="t" style="left:667px;top:835px;height:19px;line-height:19px;transform:scaleX(0.9023)">0x69253c25</span>
<span class="t" style="left:787px;top:835px;height:19px;line-height:19px;transform:scaleX(0.8992)">25.11.2025 06:18:29</span>
<svg style="left:7px;top:854px" width="13" height="16" viewBox="0 0 13 16"><path fill="#a0a0a0" d="M0 0h10v1h-10zM0 1h1v1h-1zM9 1h2v1h-2zM0 2h1v1h-1zM9 2h1v1h-1zM11 2h1v1h-1zM0 3h1v1h-1zM9 3h4v1h-4zM0 4h1v1h-1zM12 4h1v1h-1zM0 5h1v1h-1zM12 5h1v1h-1zM0 6h1v1h-1zM12 6h1v1h-1zM0 7h1v1h-1zM12 7h1v1h-1zM0 8h1v1h-1zM12 8h1v1h-1zM0 9h1v1h-1zM12 9h1v1h-1zM0 10h1v1h-1zM12 10h1v1h-1zM0 11h1v1h-1zM12 11h1v1h-1zM0 12h1v1h-1zM12 12h1v1h-1zM0 13h1v1h-1zM12 13h1v1h-1zM0 14h1v1h-1zM12 14h1v1h-1z"/><path fill="#f6f6f6" d="M1 1h8v1h-8zM1 2h8v1h-8zM10 2h1v1h-1zM1 3h8v1h-8zM1 4h11v1h-11zM1 5h11v1h-11zM1 6h11v1h-11zM1 7h11v1h-11zM1 8h11v1h-11zM1 9h11v1h-11zM1 10h11v1h-11zM1 11h11v1h-11zM1 12h11v1h-11zM1 13h11v1h-11zM1 14h11v1h-11z"/><path fill="#7a7a7a" d="M0 15h13v1h-13z"/><g shape-rendering="geometricPrecision" stroke="none"><circle cx="5.4" cy="7.4" r="3" fill="#d9ecfb" stroke="#86b4e2" stroke-width=".9"/><circle cx="8.6" cy="10.6" r="1.7" fill="#dcebfa" stroke="#4a7fc2" stroke-width="1"/><g fill="#1f5096"><circle cx="8.40" cy="7.40" r=".62"/><circle cx="7.52" cy="9.52" r=".62"/><circle cx="5.40" cy="10.40" r=".62"/><circle cx="3.28" cy="9.52" r=".62"/><circle cx="2.40" cy="7.40" r=".62"/><circle cx="3.28" cy="5.28" r=".62"/><circle cx="5.40" cy="4.40" r=".62"/><circle cx="7.52" cy="5.28" r=".62"/><circle cx="9.73" cy="11.73" r=".72"/><circle cx="7.47" cy="11.73" r=".72"/><circle cx="7.47" cy="9.47" r=".72"/><circle cx="9.73" cy="9.47" r=".72"/></g><circle cx="8.6" cy="10.6" r=".85" fill="#fff"/><circle cx="4.5" cy="7.4" r=".62" fill="#0c1430"/><circle cx="5.45" cy="6.4" r=".45" fill="#1c3c6c"/><circle cx="5.6" cy="7.7" r=".5" fill="#fff"/></g></svg>
<span class="t" style="left:23.4px;top:854px;height:19px;line-height:19px;transform:scaleX(0.9861)">cmimcext.sys</span>
<span class="t" style="left:307px;top:854px;height:19px;line-height:19px;transform:scaleX(0.9460)">fffff803`17960000</span>
<span class="t" style="left:427px;top:854px;height:19px;line-height:19px;transform:scaleX(0.9460)">fffff803`17970000</span>
<span class="t" style="left:547px;top:854px;height:19px;line-height:19px;transform:scaleX(0.8931)">0x00010000</span>
<span class="t" style="left:667px;top:854px;height:19px;line-height:19px;transform:scaleX(0.9368)">0xcf1a95f2</span>
<span class="t" style="left:787px;top:854px;height:19px;line-height:19px;transform:scaleX(0.8992)">8.02.2080 14:53:54</span>
<svg style="left:7px;top:873px" width="13" height="16" viewBox="0 0 13 16"><path fill="#a0a0a0" d="M0 0h10v1h-10zM0 1h1v1h-1zM9 1h2v1h-2zM0 2h1v1h-1zM9 2h1v1h-1zM11 2h1v1h-1zM0 3h1v1h-1zM9 3h4v1h-4zM0 4h1v1h-1zM12 4h1v1h-1zM0 5h1v1h-1zM12 5h1v1h-1zM0 6h1v1h-1zM12 6h1v1h-1zM0 7h1v1h-1zM12 7h1v1h-1zM0 8h1v1h-1zM12 8h1v1h-1zM0 9h1v1h-1zM12 9h1v1h-1zM0 10h1v1h-1zM12 10h1v1h-1zM0 11h1v1h-1zM12 11h1v1h-1zM0 12h1v1h-1zM12 12h1v1h-1zM0 13h1v1h-1zM12 13h1v1h-1zM0 14h1v1h-1zM12 14h1v1h-1z"/><path fill="#f6f6f6" d="M1 1h8v1h-8zM1 2h8v1h-8zM10 2h1v1h-1zM1 3h8v1h-8zM1 4h11v1h-11zM1 5h11v1h-11zM1 6h11v1h-11zM1 7h11v1h-11zM1 8h11v1h-11zM1 9h11v1h-11zM1 10h11v1h-11zM1 11h11v1h-11zM1 12h11v1h-11zM1 13h11v1h-11zM1 14h11v1h-11z"/><path fill="#7a7a7a" d="M0 15h13v1h-13z"/><g shape-rendering="geometricPrecision" stroke="none"><circle cx="5.4" cy="7.4" r="3" fill="#d9ecfb" stroke="#86b4e2" stroke-width=".9"/><circle cx="8.6" cy="10.6" r="1.7" fill="#dcebfa" stroke="#4a7fc2" stroke-width="1"/><g fill="#1f5096"><circle cx="8.40" cy="7.40" r=".62"/><circle cx="7.52" cy="9.52" r=".62"/><circle cx="5.40" cy="10.40" r=".62"/><circle cx="3.28" cy="9.52" r=".62"/><circle cx="2.40" cy="7.40" r=".62"/><circle cx="3.28" cy="5.28" r=".62"/><circle cx="5.40" cy="4.40" r=".62"/><circle cx="7.52" cy="5.28" r=".62"/><circle cx="9.73" cy="11.73" r=".72"/><circle cx="7.47" cy="11.73" r=".72"/><circle cx="7.47" cy="9.47" r=".72"/><circle cx="9.73" cy="9.47" r=".72"/></g><circle cx="8.6" cy="10.6" r=".85" fill="#fff"/><circle cx="4.5" cy="7.4" r=".62" fill="#0c1430"/><circle cx="5.45" cy="6.4" r=".45" fill="#1c3c6c"/><circle cx="5.6" cy="7.7" r=".5" fill="#fff"/></g></svg>
<span class="t" style="left:23.4px;top:873px;height:19px;line-height:19px;transform:scaleX(0.9543)">werkernel.sys</span>
<span class="t" style="left:307px;top:873px;height:19px;line-height:19px;transform:scaleX(0.9460)">fffff803`17980000</span>
<span class="t" style="left:427px;top:873px;height:19px;line-height:19px;transform:scaleX(0.9460)">fffff803`17996000</span>
<span class="t" style="left:547px;top:873px;height:19px;line-height:19px;transform:scaleX(0.8931)">0x00016000</span>
<span class="t" style="left:667px;top:873px;height:19px;line-height:19px;transform:scaleX(0.9406)">0x9dfdea74</span>
<span class="t" style="left:787px;top:873px;height:19px;line-height:19px;transform:scaleX(0.8992)">30.12.2053 00:25:40</span>
<svg style="left:7px;top:892px" width="13" height="16" viewBox="0 0 13 16"><path fill="#a0a0a0" d="M0 0h10v1h-10zM0 1h1v1h-1zM9 1h2v1h-2zM0 2h1v1h-1zM9 2h1v1h-1zM11 2h1v1h-1zM0 3h1v1h-1zM9 3h4v1h-4zM0 4h1v1h-1zM12 4h1v1h-1zM0 5h1v1h-1zM12 5h1v1h-1zM0 6h1v1h-1zM12 6h1v1h-1zM0 7h1v1h-1zM12 7h1v1h-1zM0 8h1v1h-1zM12 8h1v1h-1zM0 9h1v1h-1zM12 9h1v1h-1zM0 10h1v1h-1zM12 10h1v1h-1zM0 11h1v1h-1zM12 11h1v1h-1zM0 12h1v1h-1zM12 12h1v1h-1zM0 13h1v1h-1zM12 13h1v1h-1zM0 14h1v1h-1zM12 14h1v1h-1z"/><path fill="#f6f6f6" d="M1 1h8v1h-8zM1 2h8v1h-8zM10 2h1v1h-1zM1 3h8v1h-8zM1 4h11v1h-11zM1 5h11v1h-11zM1 6h11v1h-11zM1 7h11v1h-11zM1 8h11v1h-11zM1 9h11v1h-11zM1 10h11v1h-11zM1 11h11v1h-11zM1 12h11v1h-11zM1 13h11v1h-11zM1 14h11v1h-11z"/><path fill="#7a7a7a" d="M0 15h13v1h-13z"/><g shape-rendering="geometricPrecision" stroke="none"><circle cx="5.4" cy="7.4" r="3" fill="#d9ecfb" stroke="#86b4e2" stroke-width=".9"/><circle cx="8.6" cy="10.6" r="1.7" fill="#dcebfa" stroke="#4a7fc2" stroke-width="1"/><g fill="#1f5096"><circle cx="8.40" cy="7.40" r=".62"/><circle cx="7.52" cy="9.52" r=".62"/><circle cx="5.40" cy="10.40" r=".62"/><circle cx="3.28" cy="9.52" r=".62"/><circle cx="2.40" cy="7.40" r=".62"/><circle cx="3.28" cy="5.28" r=".62"/><circle cx="5.40" cy="4.40" r=".62"/><circle cx="7.52" cy="5.28" r=".62"/><circle cx="9.73" cy="11.73" r=".72"/><circle cx="7.47" cy="11.73" r=".72"/><circle cx="7.47" cy="9.47" r=".72"/><circle cx="9.73" cy="9.47" r=".72"/></g><circle cx="8.6" cy="10.6" r=".85" fill="#fff"/><circle cx="4.5" cy="7.4" r=".62" fill="#0c1430"/><circle cx="5.45" cy="6.4" r=".45" fill="#1c3c6c"/><circle cx="5.6" cy="7.7" r=".5" fill="#fff"/></g></svg>
<span class="t" style="left:23.4px;top:892px;height:19px;line-height:19px;transform:scaleX(0.9496)">ntosext.sys</span>
<span class="t" style="left:307px;top:892px;height:19px;line-height:19px;transform:scaleX(0.9460)">fffff803`179a0000</span>
<span class="t" style="left:427px;top:892px;height:19px;line-height:19px;transform:scaleX(0.9567)">fffff803`179ad000</span>
<span class="t" style="left:547px;top:892px;height:19px;line-height:19px;transform:scaleX(0.9082)">0x0000d000</span>
<span class="t" style="left:667px;top:892px;height:19px;line-height:19px;transform:scaleX(0.9087)">0x33f8a971</span>
<span class="t" style="left:787px;top:892px;height:19px;line-height:19px;transform:scaleX(0.8992)">18.08.1997 20:58:41</span>
<svg style="left:7px;top:911px" width="13" height="16" viewBox="0 0 13 16"><path fill="#a0a0a0" d="M0 0h10v1h-10zM0 1h1v1h-1zM9 1h2v1h-2zM0 2h1v1h-1zM9 2h1v1h-1zM11 2h1v1h-1zM0 3h1v1h-1zM9 3h4v1h-4zM0 4h1v1h-1zM12 4h1v1h-1zM0 5h1v1h-1zM12 5h1v1h-1zM0 6h1v1h-1zM12 6h1v1h-1zM0 7h1v1h-1zM12 7h1v1h-1zM0 8h1v1h-1zM12 8h1v1h-1zM0 9h1v1h-1zM12 9h1v1h-1zM0 10h1v1h-1zM12 10h1v1h-1zM0 11h1v1h-1zM12 11h1v1h-1zM0 12h1v1h-1zM12 12h1v1h-1zM0 13h1v1h-1zM12 13h1v1h-1zM0 14h1v1h-1zM12 14h1v1h-1z"/><path fill="#f6f6f6" d="M1 1h8v1h-8zM1 2h8v1h-8zM10 2h1v1h-1zM1 3h8v1h-8zM1 4h11v1h-11zM1 5h11v1h-11zM1 6h11v1h-11zM1 7h11v1h-11zM1 8h11v1h-11zM1 9h11v1h-11zM1 10h11v1h-11zM1 11h11v1h-11zM1 12h11v1h-11zM1 13h11v1h-11zM1 14h11v1h-11z"/><path fill="#7a7a7a" d="M0 15h13v1h-13z"/><g shape-rendering="geometricPrecision" stroke="none"><circle cx="5.4" cy="7.4" r="3" fill="#d9ecfb" stroke="#86b4e2" stroke-width=".9"/><circle cx="8.6" cy="10.6" r="1.7" fill="#dcebfa" stroke="#4a7fc2" stroke-width="1"/><g fill="#1f5096"><circle cx="8.40" cy="7.40" r=".62"/><circle cx="7.52" cy="9.52" r=".62"/><circle cx="5.40" cy="10.40" r=".62"/><circle cx="3.28" cy="9.52" r=".62"/><circle cx="2.40" cy="7.40" r=".62"/><circle cx="3.28" cy="5.28" r=".62"/><circle cx="5.40" cy="4.40" r=".62"/><circle cx="7.52" cy="5.28" r=".62"/><circle cx="9.73" cy="11.73" r=".72"/><circle cx="7.47" cy="11.73" r=".72"/><circle cx="7.47" cy="9.47" r=".72"/><circle cx="9.73" cy="9.47" r=".72"/></g><circle cx="8.6" cy="10.6" r=".85" fill="#fff"/><circle cx="4.5" cy="7.4" r=".62" fill="#0c1430"/><circle cx="5.45" cy="6.4" r=".45" fill="#1c3c6c"/><circle cx="5.6" cy="7.7" r=".5" fill="#fff"/></g></svg>
<span class="t" style="left:23.4px;top:911px;height:19px;line-height:19px;transform:scaleX(0.9903)">watchdog.sys</span>
<span class="t" style="left:307px;top:911px;height:19px;line-height:19px;transform:scaleX(0.9460)">fffff803`17a80000</span>
<span class="t" style="left:427px;top:911px;height:19px;line-height:19px;transform:scaleX(0.9460)">fffff803`17aa0000</span>
<span class="t" style="left:547px;top:911px;height:19px;line-height:19px;transform:scaleX(0.8931)">0x00020000</span>
<span class="t" style="left:667px;top:911px;height:19px;line-height:19px;transform:scaleX(0.9023)">0x1609c879</span>
<svg style="left:7px;top:930px" width="13" height="16" viewBox="0 0 13 16"><path fill="#a0a0a0" d="M0 0h10v1h-10zM0 1h1v1h-1zM9 1h2v1h-2zM0 2h1v1h-1zM9 2h1v1h-1zM11 2h1v1h-1zM0 3h1v1h-1zM9 3h4v1h-4zM0 4h1v1h-1zM12 4h1v1h-1zM0 5h1v1h-1zM12 5h1v1h-1zM0 6h1v1h-1zM12 6h1v1h-1zM0 7h1v1h-1zM12 7h1v1h-1zM0 8h1v1h-1zM12 8h1v1h-1zM0 9h1v1h-1zM12 9h1v1h-1zM0 10h1v1h-1zM12 10h1v1h-1zM0 11h1v1h-1zM12 11h1v1h-1zM0 12h1v1h-1zM12 12h1v1h-1zM0 13h1v1h-1zM12 13h1v1h-1zM0 14h1v1h-1zM12 14h1v1h-1z"/><path fill="#f6f6f6" d="M1 1h8v1h-8zM1 2h8v1h-8zM10 2h1v1h-1zM1 3h8v1h-8zM1 4h11v1h-11zM1 5h11v1h-11zM1 6h11v1h-11zM1 7h11v1h-11zM1 8h11v1h-11zM1 9h11v1h-11zM1 10h11v1h-11zM1 11h11v1h-11zM1 12h11v1h-11zM1 13h11v1h-11zM1 14h11v1h-11z"/><path fill="#7a7a7a" d="M0 15h13v1h-13z"/><g shape-rendering="geometricPrecision" stroke="none"><circle cx="5.4" cy="7.4" r="3" fill="#d9ecfb" stroke="#86b4e2" stroke-width=".9"/><circle cx="8.6" cy="10.6" r="1.7" fill="#dcebfa" stroke="#4a7fc2" stroke-width="1"/><g fill="#1f5096"><circle cx="8.40" cy="7.40" r=".62"/><circle cx="7.52" cy="9.52" r=".62"/><circle cx="5.40" cy="10.40" r=".62"/><circle cx="3.28" cy="9.52" r=".62"/><circle cx="2.40" cy="7.40" r=".62"/><circle cx="3.28" cy="5.28" r=".62"/><circle cx="5.40" cy="4.40" r=".62"/><circle cx="7.52" cy="5.28" r=".62"/><circle cx="9.73" cy="11.73" r=".72"/><circle cx="7.47" cy="11.73" r=".72"/><circle cx="7.47" cy="9.47" r=".72"/><circle cx="9.73" cy="9.47" r=".72"/></g><circle cx="8.6" cy="10.6" r=".85" fill="#fff"/><circle cx="4.5" cy="7.4" r=".62" fill="#0c1430"/><circle cx="5.45" cy="6.4" r=".45" fill="#1c3c6c"/><circle cx="5.6" cy="7.7" r=".5" fill="#fff"/></g></svg>
<span class="t" style="left:23.4px;top:930px;height:19px;line-height:19px;transform:scaleX(0.8998)">WMILIB.SYS</span>
<span class="t" style="left:307px;top:930px;height:19px;line-height:19px;transform:scaleX(0.9698)">fffff803`17fb0000</span>
<span class="t" style="left:427px;top:930px;height:19px;line-height:19px;transform:scaleX(0.9808)">fffff803`17fbd000</span>
<span class="t" style="left:547px;top:930px;height:19px;line-height:19px;transform:scaleX(0.9082)">0x0000d000</span>
<span class="t" style="left:667px;top:930px;height:19px;line-height:19px;transform:scaleX(0.9347)">0xbf8195c9</span>
<span class="t" style="left:787px;top:930px;height:19px;line-height:19px;transform:scaleX(0.8992)">24.10.2071 20:32:25</span>
<svg style="left:7px;top:949px" width="13" height="16" viewBox="0 0 13 16"><path fill="#a0a0a0" d="M0 0h10v1h-10zM0 1h1v1h-1zM9 1h2v1h-2zM0 2h1v1h-1zM9 2h1v1h-1zM11 2h1v1h-1zM0 3h1v1h-1zM9 3h4v1h-4zM0 4h1v1h-1zM12 4h1v1h-1zM0 5h1v1h-1zM12 5h1v1h-1zM0 6h1v1h-1zM12 6h1v1h-1zM0 7h1v1h-1zM12 7h1v1h-1zM0 8h1v1h-1zM12 8h1v1h-1zM0 9h1v1h-1zM12 9h1v1h-1zM0 10h1v1h-1zM12 10h1v1h-1zM0 11h1v1h-1zM12 11h1v1h-1zM0 12h1v1h-1zM12 12h1v1h-1zM0 13h1v1h-1zM12 13h1v1h-1zM0 14h1v1h-1zM12 14h1v1h-1z"/><path fill="#f6f6f6" d="M1 1h8v1h-8zM1 2h8v1h-8zM10 2h1v1h-1zM1 3h8v1h-8zM1 4h11v1h-11zM1 5h11v1h-11zM1 6h11v1h-11zM1 7h11v1h-11zM1 8h11v1h-11zM1 9h11v1h-11zM1 10h11v1h-11zM1 11h11v1h-11zM1 12h11v1h-11zM1 13h11v1h-11zM1 14h11v1h-11z"/><path fill="#7a7a7a" d="M0 15h13v1h-13z"/><g shape-rendering="geometricPrecision" stroke="none"><circle cx="5.4" cy="7.4" r="3" fill="#d9ecfb" stroke="#86b4e2" stroke-width=".9"/><circle cx="8.6" cy="10.6" r="1.7" fill="#dcebfa" stroke="#4a7fc2" stroke-width="1"/><g fill="#1f5096"><circle cx="8.40" cy="7.40" r=".62"/><circle cx="7.52" cy="9.52" r=".62"/><circle cx="5.40" cy="10.40" r=".62"/><circle cx="3.28" cy="9.52" r=".62"/><circle cx="2.40" cy="7.40" r=".62"/><circle cx="3.28" cy="5.28" r=".62"/><circle cx="5.40" cy="4.40" r=".62"/><circle cx="7.52" cy="5.28" r=".62"/><circle cx="9.73" cy="11.73" r=".72"/><circle cx="7.47" cy="11.73" r=".72"/><circle cx="7.47" cy="9.47" r=".72"/><circle cx="9.73" cy="9.47" r=".72"/></g><circle cx="8.6" cy="10.6" r=".85" fill="#fff"/><circle cx="4.5" cy="7.4" r=".62" fill="#0c1430"/><circle cx="5.45" cy="6.4" r=".45" fill="#1c3c6c"/><circle cx="5.6" cy="7.7" r=".5" fill="#fff"/></g></svg>
<span class="t" style="left:23.4px;top:949px;height:19px;line-height:19px;transform:scaleX(0.9664)">dxgkrnl.sys</span>
<span class="t" style="left:307px;top:949px;height:19px;line-height:19px;transform:scaleX(0.9567)">fffff803`17ab0000</span>
<span class="t" style="left:427px;top:949px;height:19px;line-height:19px;transform:scaleX(0.9588)">fffff803`17fa2000</span>
<span class="t" style="left:547px;top:949px;height:19px;line-height:19px;transform:scaleX(0.9087)">0x004f2000</span>
<span class="t" style="left:667px;top:949px;height:19px;line-height:19px;transform:scaleX(0.9368)">0x4f673c6f</span>
<span class="t" style="left:787px;top:949px;height:19px;line-height:19px;transform:scaleX(0.8992)">19.03.2012 15:02:23</span>
<svg style="left:7px;top:968px" width="13" height="16" viewBox="0 0 13 16"><path fill="#a0a0a0" d="M0 0h10v1h-10zM0 1h1v1h-1zM9 1h2v1h-2zM0 2h1v1h-1zM9 2h1v1h-1zM11 2h1v1h-1zM0 3h1v1h-1zM9 3h4v1h-4zM0 4h1v1h-1zM12 4h1v1h-1zM0 5h1v1h-1zM12 5h1v1h-1zM0 6h1v1h-1zM12 6h1v1h-1zM0 7h1v1h-1zM12 7h1v1h-1zM0 8h1v1h-1zM12 8h1v1h-1zM0 9h1v1h-1zM12 9h1v1h-1zM0 10h1v1h-1zM12 10h1v1h-1zM0 11h1v1h-1zM12 11h1v1h-1zM0 12h1v1h-1zM12 12h1v1h-1zM0 13h1v1h-1zM12 13h1v1h-1zM0 14h1v1h-1zM12 14h1v1h-1z"/><path fill="#f6f6f6" d="M1 1h8v1h-8zM1 2h8v1h-8zM10 2h1v1h-1zM1 3h8v1h-8zM1 4h11v1h-11zM1 5h11v1h-11zM1 6h11v1h-11zM1 7h11v1h-11zM1 8h11v1h-11zM1 9h11v1h-11zM1 10h11v1h-11zM1 11h11v1h-11zM1 12h11v1h-11zM1 13h11v1h-11zM1 14h11v1h-11z"/><path fill="#7a7a7a" d="M0 15h13v1h-13z"/><g shape-rendering="geometricPrecision" stroke="none"><circle cx="5.4" cy="7.4" r="3" fill="#d9ecfb" stroke="#86b4e2" stroke-width=".9"/><circle cx="8.6" cy="10.6" r="1.7" fill="#dcebfa" stroke="#4a7fc2" stroke-width="1"/><g fill="#1f5096"><circle cx="8.40" cy="7.40" r=".62"/><circle cx="7.52" cy="9.52" r=".62"/><circle cx="5.40" cy="10.40" r=".62"/><circle cx="3.28" cy="9.52" r=".62"/><circle cx="2.40" cy="7.40" r=".62"/><circle cx="3.28" cy="5.28" r=".62"/><circle cx="5.40" cy="4.40" r=".62"/><circle cx="7.52" cy="5.28" r=".62"/><circle cx="9.73" cy="11.73" r=".72"/><circle cx="7.47" cy="11.73" r=".72"/><circle cx="7.47" cy="9.47" r=".72"/><circle cx="9.73" cy="9.47" r=".72"/></g><circle cx="8.6" cy="10.6" r=".85" fill="#fff"/><circle cx="4.5" cy="7.4" r=".62" fill="#0c1430"/><circle cx="5.45" cy="6.4" r=".45" fill="#1c3c6c"/><circle cx="5.6" cy="7.7" r=".5" fill="#fff"/></g></svg>
<span class="t" style="left:23.4px;top:968px;height:19px;line-height:19px;transform:scaleX(0.9542)">win32k.sys</span>
<span class="t" style="left:307px;top:968px;height:19px;line-height:19px;transform:scaleX(0.9567)">fffff803`179b0000</span>
<span class="t" style="left:427px;top:968px;height:19px;line-height:19px;transform:scaleX(0.9460)">fffff803`17a76000</span>
<span class="t" style="left:547px;top:968px;height:19px;line-height:19px;transform:scaleX(0.9023)">0x000c6000</span>
<span class="t" style="left:667px;top:968px;height:19px;line-height:19px;transform:scaleX(0.8931)">0x13904a98</span>
<svg style="left:7px;top:987px" width="13" height="16" viewBox="0 0 13 16"><path fill="#a0a0a0" d="M0 0h10v1h-10zM0 1h1v1h-1zM9 1h2v1h-2zM0 2h1v1h-1zM9 2h1v1h-1zM11 2h1v1h-1zM0 3h1v1h-1zM9 3h4v1h-4zM0 4h1v1h-1zM12 4h1v1h-1zM0 5h1v1h-1zM12 5h1v1h-1zM0 6h1v1h-1zM12 6h1v1h-1zM0 7h1v1h-1zM12 7h1v1h-1zM0 8h1v1h-1zM12 8h1v1h-1zM0 9h1v1h-1zM12 9h1v1h-1zM0 10h1v1h-1zM12 10h1v1h-1zM0 11h1v1h-1zM12 11h1v1h-1zM0 12h1v1h-1zM12 12h1v1h-1zM0 13h1v1h-1zM12 13h1v1h-1zM0 14h1v1h-1zM12 14h1v1h-1z"/><path fill="#f6f6f6" d="M1 1h8v1h-8zM1 2h8v1h-8zM10 2h1v1h-1zM1 3h8v1h-8zM1 4h11v1h-11zM1 5h11v1h-11zM1 6h11v1h-11zM1 7h11v1h-11zM1 8h11v1h-11zM1 9h11v1h-11zM1 10h11v1h-11zM1 11h11v1h-11zM1 12h11v1h-11zM1 13h11v1h-11zM1 14h11v1h-11z"/><path fill="#7a7a7a" d="M0 15h13v1h-13z"/><g shape-rendering="geometricPrecision" stroke="none"><circle cx="5.4" cy="7.4" r="3" fill="#d9ecfb" stroke="#86b4e2" stroke-width=".9"/><circle cx="8.6" cy="10.6" r="1.7" fill="#dcebfa" stroke="#4a7fc2" stroke-width="1"/><g fill="#1f5096"><circle cx="8.40" cy="7.40" r=".62"/><circle cx="7.52" cy="9.52" r=".62"/><circle cx="5.40" cy="10.40" r=".62"/><circle cx="3.28" cy="9.52" r=".62"/><circle cx="2.40" cy="7.40" r=".62"/><circle cx="3.28" cy="5.28" r=".62"/><circle cx="5.40" cy="4.40" r=".62"/><circle cx="7.52" cy="5.28" r=".62"/><circle cx="9.73" cy="11.73" r=".72"/><circle cx="7.47" cy="11.73" r=".72"/><circle cx="7.47" cy="9.47" r=".72"/><circle cx="9.73" cy="9.47" r=".72"/></g><circle cx="8.6" cy="10.6" r=".85" fill="#fff"/><circle cx="4.5" cy="7.4" r=".62" fill="#0c1430"/><circle cx="5.45" cy="6.4" r=".45" fill="#1c3c6c"/><circle cx="5.6" cy="7.7" r=".5" fill="#fff"/></g></svg>
<span class="t" style="left:23.4px;top:987px;height:19px;line-height:19px;transform:scaleX(0.9510)">CI.dll</span>
<span class="t" style="left:307px;top:987px;height:19px;line-height:19px;transform:scaleX(0.9660)">fffff803`17fc0000</span>
<span class="t" style="left:427px;top:987px;height:19px;line-height:19px;transform:scaleX(0.9567)">fffff803`180d0000</span>
<span class="t" style="left:547px;top:987px;height:19px;line-height:19px;transform:scaleX(0.8931)">0x00110000</span>
<span class="t" style="left:667px;top:987px;height:19px;line-height:19px;transform:scaleX(0.8931)">0x18e6a874</span>
<div style="left:7px;top:1005px;width:13px;height:2px;overflow:hidden"><svg style="left:0px;top:0px" width="13" height="16" viewBox="0 0 13 16"><path fill="#a0a0a0" d="M0 0h10v1h-10zM0 1h1v1h-1zM9 1h2v1h-2zM0 2h1v1h-1zM9 2h1v1h-1zM11 2h1v1h-1zM0 3h1v1h-1zM9 3h4v1h-4zM0 4h1v1h-1zM12 4h1v1h-1zM0 5h1v1h-1zM12 5h1v1h-1zM0 6h1v1h-1zM12 6h1v1h-1zM0 7h1v1h-1zM12 7h1v1h-1zM0 8h1v1h-1zM12 8h1v1h-1zM0 9h1v1h-1zM12 9h1v1h-1zM0 10h1v1h-1zM12 10h1v1h-1zM0 11h1v1h-1zM12 11h1v1h-1zM0 12h1v1h-1zM12 12h1v1h-1zM0 13h1v1h-1zM12 13h1v1h-1zM0 14h1v1h-1zM12 14h1v1h-1z"/><path fill="#f6f6f6" d="M1 1h8v1h-8zM1 2h8v1h-8zM10 2h1v1h-1zM1 3h8v1h-8zM1 4h11v1h-11zM1 5h11v1h-11zM1 6h11v1h-11zM1 7h11v1h-11zM1 8h11v1h-11zM1 9h11v1h-11zM1 10h11v1h-11zM1 11h11v1h-11zM1 12h11v1h-11zM1 13h11v1h-11zM1 14h11v1h-11z"/><path fill="#7a7a7a" d="M0 15h13v1h-13z"/><g shape-rendering="geometricPrecision" stroke="none"><circle cx="5.4" cy="7.4" r="3" fill="#d9ecfb" stroke="#86b4e2" stroke-width=".9"/><circle cx="8.6" cy="10.6" r="1.7" fill="#dcebfa" stroke="#4a7fc2" stroke-width="1"/><g fill="#1f5096"><circle cx="8.40" cy="7.40" r=".62"/><circle cx="7.52" cy="9.52" r=".62"/><circle cx="5.40" cy="10.40" r=".62"/><circle cx="3.28" cy="9.52" r=".62"/><circle cx="2.40" cy="7.40" r=".62"/><circle cx="3.28" cy="5.28" r=".62"/><circle cx="5.40" cy="4.40" r=".62"/><circle cx="7.52" cy="5.28" r=".62"/><circle cx="9.73" cy="11.73" r=".72"/><circle cx="7.47" cy="11.73" r=".72"/><circle cx="7.47" cy="9.47" r=".72"/><circle cx="9.73" cy="9.47" r=".72"/></g><circle cx="8.6" cy="10.6" r=".85" fill="#fff"/><circle cx="4.5" cy="7.4" r=".62" fill="#0c1430"/><circle cx="5.45" cy="6.4" r=".45" fill="#1c3c6c"/><circle cx="5.6" cy="7.7" r=".5" fill="#fff"/></g></svg></div>
<div style="left:0;top:1008px;width:1919px;height:1px;background:#fafafa"></div>
<div style="left:0;top:1009px;width:1919px;height:1px;background:#dcdcdc"></div>
<span class="t" style="left:2px;top:1012px;height:21px;line-height:21px;transform:scaleX(0.9147)">2 Crashes, 1 Selected</span>
<div style="left:299px;top:1011px;width:1px;height:20px;background:#d7d7d7"></div>
<div style="left:1023px;top:1011px;width:1px;height:20px;background:#d7d7d7"></div>
<span class="t" style="left:308px;top:1009px;height:20px;line-height:20px;transform:scaleX(1.0191);font-size:11.5px;color:#0000ff;font-weight:bold">NirSoft Freeware.  http://www.nirsoft.net</span>
<div style="left:0;top:1031px;width:1919px;height:1px;background:#fcfcfc"></div>
<div style="left:0;top:1032px;width:1919px;height:2px;background:#28282a"></div>
<div class="dlg"><div class="dt"></div>
<span class="t" style="left:3.5px;top:1px;height:25px;line-height:25px;transform:scaleX(0.9782);color:#8b8b8b">Properties</span>
<svg style="left:469px;top:7px" width="11" height="11" viewBox="0 0 11 11" class="gp"><path d="M0 0l10 10M10 0l-10 10" stroke="#6c6c6c" stroke-width="1.05" fill="none"/></svg>
<div class="f" style="top:36px"></div>
<span class="t" style="left:11px;top:37px;height:18px;line-height:18px;transform:scaleX(0.9498);font-size:14px;font-weight:bold">Dump File:</span>
<span class="t" style="left:155px;top:37px;height:18px;line-height:18px;transform:scaleX(0.9897);font-size:14px;color:#0505b9;font-weight:bold">123025-6859-01.dmp</span>
<div class="f" style="top:60px"></div>
<span class="t" style="left:11px;top:61px;height:18px;line-height:18px;transform:scaleX(0.9492);font-size:14px;font-weight:bold">Crash Time:</span>
<span class="t" style="left:155px;top:61px;height:18px;line-height:18px;transform:scaleX(0.9946);font-size:14px;color:#0505b9;font-weight:bold">30.12.2025 04:28:31</span>
<div class="f" style="top:84px"></div>
<span class="t" style="left:11px;top:85px;height:18px;line-height:18px;transform:scaleX(0.9335);font-size:14px;font-weight:bold">Bug Check String:</span>
<span class="t" style="left:155px;top:85px;height:18px;line-height:18px;transform:scaleX(0.9588);font-size:14px;color:#0505b9;font-weight:bold">SYSTEM_THREAD_EXCEPTION_NOT_HANDLED</span>
<div class="f" style="top:108px"></div>
<span class="t" style="left:11px;top:109px;height:18px;line-height:18px;transform:scaleX(0.9316);font-size:14px;font-weight:bold">Bug Check Code:</span>
<span class="t" style="left:155px;top:109px;height:18px;line-height:18px;transform:scaleX(1.0095);font-size:14px;color:#0505b9;font-weight:bold">0x1000007e</span>
<div class="f" style="top:132px"></div>
<span class="t" style="left:11px;top:133px;height:18px;line-height:18px;transform:scaleX(0.9643);font-size:14px;font-weight:bold">Parameter 1:</span>
<span class="t" style="left:155px;top:133px;height:18px;line-height:18px;transform:scaleX(0.9468);font-size:14px;color:#0505b9;font-weight:bold">ffffffff`c0000005</span>
<div class="f" style="top:156px"></div>
<span class="t" style="left:11px;top:157px;height:18px;line-height:18px;transform:scaleX(0.9643);font-size:14px;font-weight:bold">Parameter 2:</span>
<span class="t" style="left:155px;top:157px;height:18px;line-height:18px;transform:scaleX(0.9774);font-size:14px;color:#0505b9;font-weight:bold">fffff803`85e72ba4</span>
<div class="f" style="top:180px"></div>
<span class="t" style="left:11px;top:181px;height:18px;line-height:18px;transform:scaleX(0.9643);font-size:14px;font-weight:bold">Parameter 3:</span>
<span class="t" style="left:155px;top:181px;height:18px;line-height:18px;transform:scaleX(0.9645);font-size:14px;color:#0505b9;font-weight:bold">fffffb8d`097ae4d8</span>
<div class="f" style="top:204px"></div>
<span class="t" style="left:11px;top:205px;height:18px;line-height:18px;transform:scaleX(0.9643);font-size:14px;font-weight:bold">Parameter 4:</span>
<span class="t" style="left:155px;top:205px;height:18px;line-height:18px;transform:scaleX(0.9567);font-size:14px;color:#0505b9;font-weight:bold">fffffb8d`097adce0</span>
<div class="f" style="top:228px"></div>
<span class="t" style="left:11px;top:229px;height:18px;line-height:18px;transform:scaleX(0.9705);font-size:14px;font-weight:bold">Caused By Driver:</span>
<span class="t" style="left:155px;top:229px;height:18px;line-height:18px;transform:scaleX(0.9530);font-size:14px;color:#0505b9;font-weight:bold">ntoskrnl.exe</span>
<div class="f" style="top:252px"></div>
<span class="t" style="left:11px;top:253px;height:18px;line-height:18px;transform:scaleX(0.9538);font-size:14px;font-weight:bold">Caused By Address:</span>
<span class="t" style="left:155px;top:253px;height:18px;line-height:18px;transform:scaleX(0.9759);font-size:14px;color:#0505b9;font-weight:bold">ntoskrnl.exe+272ba4</span>
<div class="f" style="top:276px"></div>
<span class="t" style="left:11px;top:277px;height:18px;line-height:18px;transform:scaleX(0.9555);font-size:14px;font-weight:bold">File Description:</span>
<div class="f" style="top:300px"></div>
<span class="t" style="left:11px;top:301px;height:18px;line-height:18px;transform:scaleX(0.9390);font-size:14px;font-weight:bold">Product Name:</span>
<div class="f" style="top:324px"></div>
<span class="t" style="left:11px;top:325px;height:18px;line-height:18px;transform:scaleX(0.9321);font-size:14px;font-weight:bold">Company:</span>
<div class="f" style="top:348px"></div>
<span class="t" style="left:11px;top:349px;height:18px;line-height:18px;transform:scaleX(0.9521);font-size:14px;font-weight:bold">File Version:</span>
<div class="f" style="top:372px"></div>
<span class="t" style="left:11px;top:373px;height:18px;line-height:18px;transform:scaleX(0.9392);font-size:14px;font-weight:bold">Processor:</span>
<span class="t" style="left:155px;top:373px;height:18px;line-height:18px;transform:scaleX(0.9718);font-size:14px;color:#0505b9;font-weight:bold">x64</span>
<div class="f" style="top:396px"></div>
<span class="t" style="left:11px;top:397px;height:18px;line-height:18px;transform:scaleX(0.9400);font-size:14px;font-weight:bold">Crash Address:</span>
<span class="t" style="left:155px;top:397px;height:18px;line-height:18px;transform:scaleX(0.9759);font-size:14px;color:#0505b9;font-weight:bold">ntoskrnl.exe+272ba4</span>
<div class="f" style="top:420px"></div>
<span class="t" style="left:11px;top:421px;height:18px;line-height:18px;transform:scaleX(0.9392);font-size:14px;font-weight:bold">Stack Address 1:</span>
<div class="f" style="top:444px"></div>
<span class="t" style="left:11px;top:445px;height:18px;line-height:18px;transform:scaleX(0.9392);font-size:14px;font-weight:bold">Stack Address 2:</span>
<div class="f" style="top:468px"></div>
<span class="t" style="left:11px;top:469px;height:18px;line-height:18px;transform:scaleX(0.9392);font-size:14px;font-weight:bold">Stack Address 3:</span>
<div class="f" style="top:492px"></div>
<span class="t" style="left:11px;top:493px;height:18px;line-height:18px;transform:scaleX(0.9469);font-size:14px;font-weight:bold">Computer Name:</span>
<div class="f" style="top:516px"></div>
<span class="t" style="left:11px;top:517px;height:18px;line-height:18px;transform:scaleX(0.9377);font-size:14px;font-weight:bold">Full Path:</span>
<span class="t" style="left:155px;top:517px;height:18px;line-height:18px;transform:scaleX(0.9830);font-size:14px;color:#0505b9;font-weight:bold">C:\WINDOWS\Minidump\123025-6859-01.dmp</span>
<div class="f" style="top:540px"></div>
<span class="t" style="left:11px;top:541px;height:18px;line-height:18px;transform:scaleX(0.9405);font-size:14px;font-weight:bold">Processors Count:</span>
<span class="t" style="left:155px;top:541px;height:18px;line-height:18px;transform:scaleX(0.9376);font-size:14px;color:#0505b9;font-weight:bold">12</span>
<div class="f" style="top:564px"></div>
<span class="t" style="left:11px;top:565px;height:18px;line-height:18px;transform:scaleX(0.9523);font-size:14px;font-weight:bold">Major Version:</span>
<span class="t" style="left:155px;top:565px;height:18px;line-height:18px;transform:scaleX(0.9376);font-size:14px;color:#0505b9;font-weight:bold">15</span>
<div class="f" style="top:588px"></div>
<span class="t" style="left:11px;top:589px;height:18px;line-height:18px;transform:scaleX(0.9448);font-size:14px;font-weight:bold">Minor Version:</span>
<span class="t" style="left:155px;top:589px;height:18px;line-height:18px;transform:scaleX(0.9941);font-size:14px;color:#0505b9;font-weight:bold">26100</span>
<div class="f" style="top:612px"></div>
<span class="t" style="left:11px;top:613px;height:18px;line-height:18px;transform:scaleX(0.9747);font-size:14px;font-weight:bold">Dump File Size:</span>
<span class="t" style="left:155px;top:613px;height:18px;line-height:18px;transform:scaleX(0.9858);font-size:14px;color:#0505b9;font-weight:bold">2 756 411</span>
<div class="f" style="top:636px"></div>
<span class="t" style="left:11px;top:637px;height:18px;line-height:18px;transform:scaleX(0.9624);font-size:14px;font-weight:bold">Dump File Time:</span>
<span class="t" style="left:155px;top:637px;height:18px;line-height:18px;transform:scaleX(1.0054);font-size:14px;color:#0505b9;font-weight:bold">30.12.2025 04:48:06</span>
</div>
<div class="ok"></div>
<span class="t" style="left:1561.5px;top:889px;height:22px;line-height:22px;transform:scaleX(0.7720);font-size:13px">OK</span>
</body></html>
